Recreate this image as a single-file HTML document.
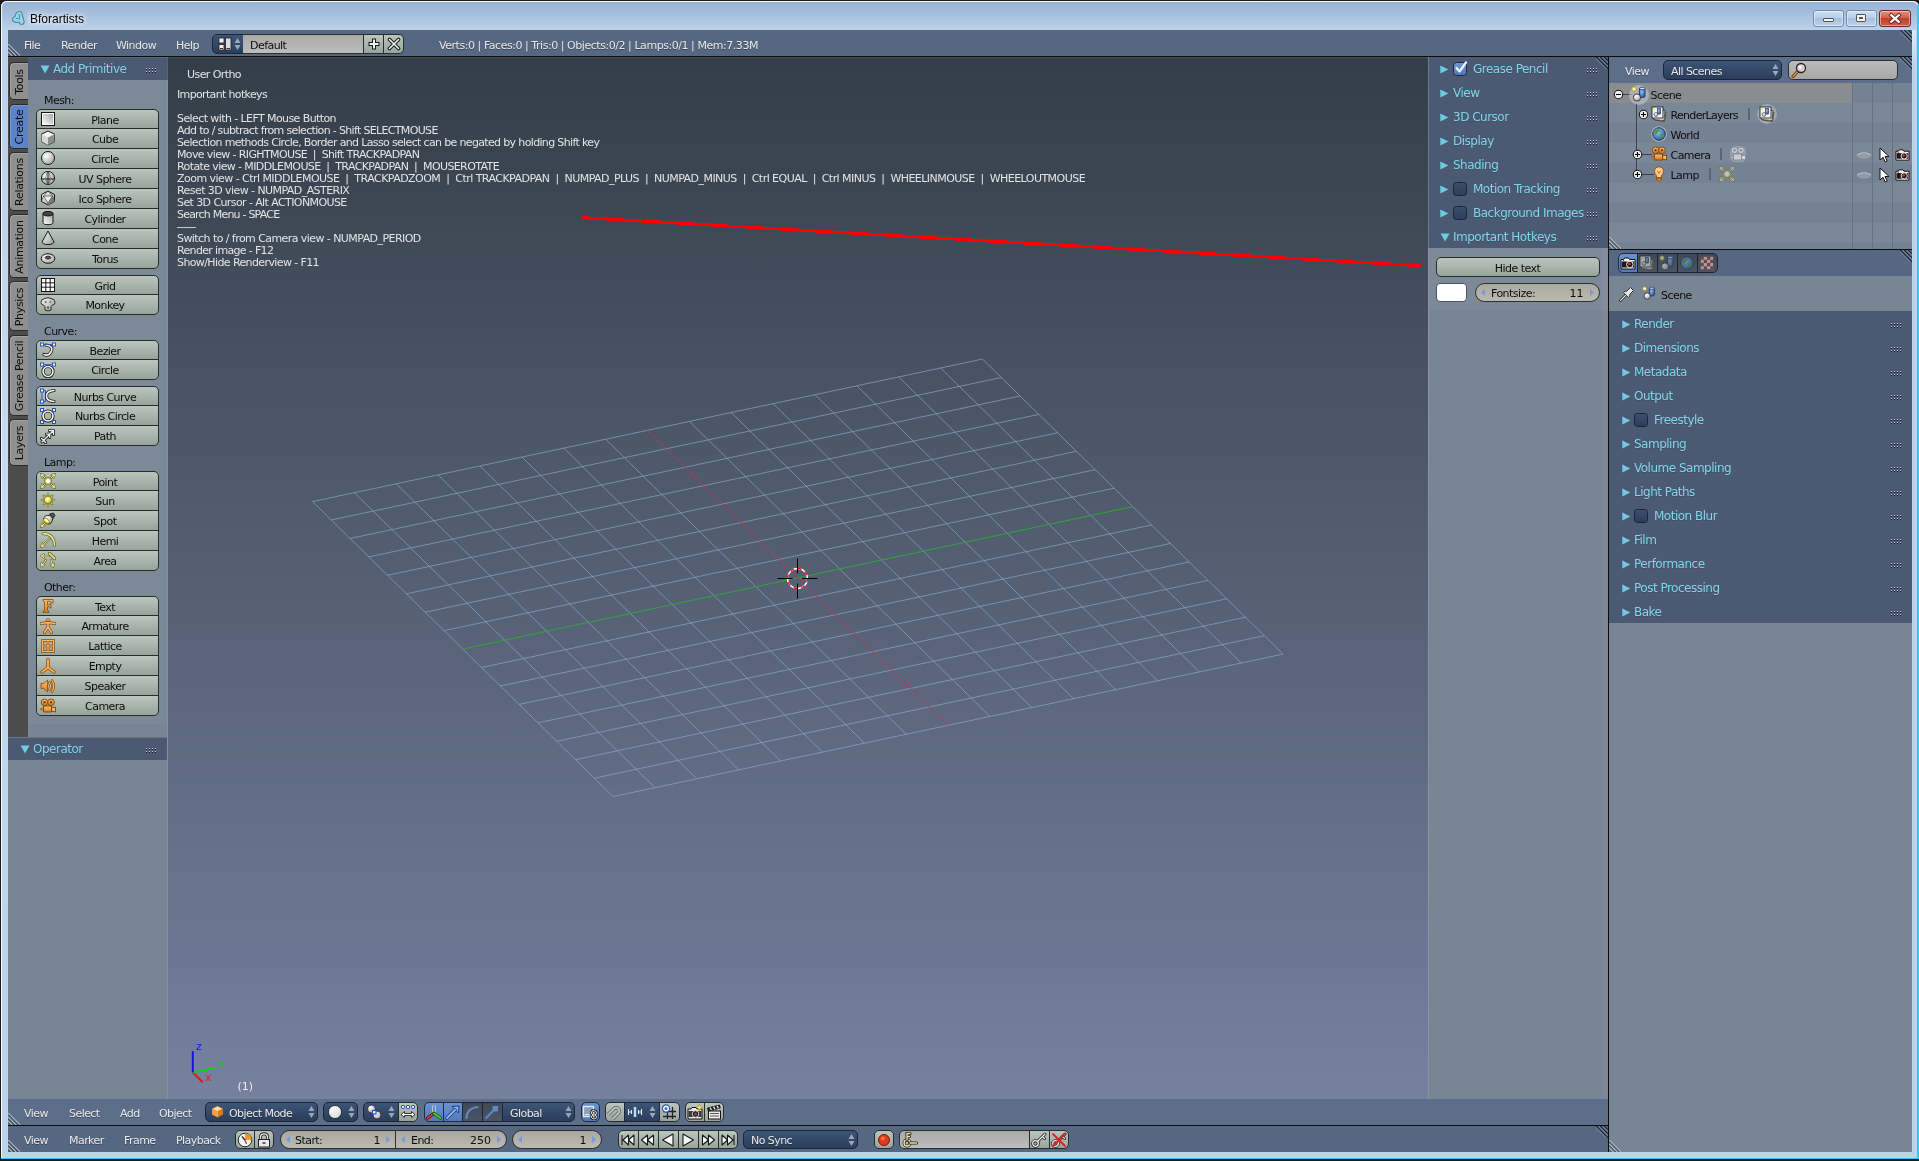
<!DOCTYPE html>
<html><head><meta charset="utf-8"><title>Bforartists</title>
<style>
html,body{margin:0;padding:0;}
body{width:1919px;height:1161px;overflow:hidden;position:relative;background:#bdd2eb;font-family:"DejaVu Sans","Liberation Sans",sans-serif;font-size:11px;letter-spacing:-0.55px;color:#0a0a0a;}
div,span,svg{position:absolute;box-sizing:border-box;}
.t{white-space:nowrap;line-height:14px;height:14px;}
.w{color:#e9e9e9;text-shadow:0 1px 0 rgba(0,0,0,.35);}
.k{color:#0c0c0c;}
.c{color:#7fd6ea;font-size:12px;letter-spacing:-0.5px;text-shadow:0 1px 0 rgba(0,0,0,.15);}
.hdr{background:#566781;}
.hdr2{background:#5d6e8b;}
.ph{background:#4b5a72;}
.pbg{background:#788593;}.pbd{background:#7c8997;}
.btn{background:linear-gradient(#bac5bd,#97a49c);border:1px solid #2a2c2c;}
.dd{background:linear-gradient(#3d5577,#2a3d5c);border:1px solid #1b2636;}
.num{background:linear-gradient(#aaa9a0,#bbbab1);border:1px solid #2e2e2e;}
.txf{background:linear-gradient(#a9a9a9,#bdbdbd);border:1px solid #2e2e2e;}
.blu{background:linear-gradient(#6a92d0,#507ab8);border:1px solid #1d2b45;}
.drk{background:linear-gradient(#3f4957,#4a5564);border:1px solid #1d2330;}
</style></head>
<body>
<div style="left:0;top:0;width:1919px;height:1161px;will-change:transform;">
<svg width="0" height="0" style="left:0;top:0"><defs>
<linearGradient id="gw" x1="0" y1="0" x2="1" y2="1"><stop offset="0" stop-color="#fff"/><stop offset="1" stop-color="#9a9a9a"/></linearGradient>
<linearGradient id="gw2" x1="1" y1="0" x2="0" y2="1"><stop offset="0" stop-color="#a8a8a8"/><stop offset="1" stop-color="#fafafa"/></linearGradient>
<radialGradient id="gs" cx="0.35" cy="0.3" r="0.8"><stop offset="0" stop-color="#fff"/><stop offset="1" stop-color="#a2a2a2"/></radialGradient>
<radialGradient id="gy" cx="0.4" cy="0.35" r="0.7"><stop offset="0" stop-color="#fff"/><stop offset="0.5" stop-color="#f4ee50"/><stop offset="1" stop-color="#9a9420"/></radialGradient>
<linearGradient id="go" x1="0" y1="0" x2="0" y2="1"><stop offset="0" stop-color="#ffc070"/><stop offset="1" stop-color="#d97a1a"/></linearGradient>
<radialGradient id="gb" cx="0.4" cy="0.35" r="0.7"><stop offset="0" stop-color="#8fc0f0"/><stop offset="1" stop-color="#2a5aa0"/></radialGradient>
</defs></svg>
<div style="left:0px;top:0px;width:1919px;height:1161px;background:#1b1b1b;"></div>
<div style="left:1px;top:1px;width:1918px;height:1158px;background:#bdd2eb;border-radius:6px 6px 0 0;box-shadow:inset 0 1px 0 0 #f4f9ff, inset 1px 0 0 0 #f4f9ff;"></div>
<div style="left:2px;top:2px;width:1915px;height:28px;background:linear-gradient(#98b3d5,#a8c0de 45%,#bad2eb);border-radius:5px 5px 0 0;"></div>
<div style="left:1px;top:1158px;width:1917px;height:1px;background:#3cc4ea;"></div>
<div style="left:1917px;top:5px;width:2px;height:1154px;background:#46c2ee;"></div>
<div style="left:1912px;top:30px;width:4px;height:40px;background:linear-gradient(#dcebfa,#bdd2eb);"></div>
<div style="left:2px;top:100px;width:6px;height:900px;background:linear-gradient(#bdd2eb,#c6daf0 40%,#bdd2eb);"></div>
<svg style="left:11px;top:10px;" width="15" height="16" viewBox="0 0 15 16"><path d="M8 1.500Q10.800 1 11 4L12.500 9.500Q14.500 13.500 11 14.500Q8.500 14.500 8 12Q4 13 2 11Q0.500 8 4 6.500Q4.500 2.500 8 1.500Z" fill="#8fd8f0" stroke="#5a7f96" stroke-width="1.100"/><path d="M5 8.500Q8 8 9 9.500M8 4Q9 6 8.500 8" fill="none" stroke="#5a7f96" stroke-width="1"/></svg>
<span class="t" style="left:30px;top:11px;font-family:'Liberation Sans',sans-serif;font-size:12px;letter-spacing:0;color:#000;line-height:16px;height:16px;text-shadow:0 0 4px #fff,0 0 6px #fff;">Bforartists</span>
<div style="left:1813px;top:10px;width:31px;height:17px;background:linear-gradient(#cfe0f2,#b9cfe8 45%,#a5c0de 50%,#bcd2ea);border:1px solid #6f8db4;border-radius:3px;box-shadow:inset 0 0 0 1px rgba(255,255,255,.45);"></div>
<div style="left:1846px;top:10px;width:31px;height:17px;background:linear-gradient(#cfe0f2,#b9cfe8 45%,#a5c0de 50%,#bcd2ea);border:1px solid #6f8db4;border-radius:3px;box-shadow:inset 0 0 0 1px rgba(255,255,255,.45);"></div>
<div style="left:1879px;top:10px;width:32px;height:17px;background:linear-gradient(#e0907f,#d4604c 45%,#c2402c 50%,#d05a44);border:1px solid #6a2a22;border-radius:3px;box-shadow:inset 0 0 0 1px rgba(255,255,255,.45);"></div>
<div style="left:1823px;top:18px;width:11px;height:4px;background:#f4f4f4;border:1px solid #555;border-radius:1px;"></div>
<div style="left:1856px;top:14px;width:10px;height:8px;background:#f4f4f4;border:1px solid #555;border-radius:1px;"></div>
<div style="left:1859px;top:17px;width:4px;height:2px;background:#8fa9c8;border:1px solid #555;"></div>
<svg style="left:1888px;top:12px;" width="14" height="13" viewBox="0 0 14 13"><path d="M3.200 3.200L10.800 9.800M10.800 3.200L3.200 9.800" stroke="#5a2018" stroke-width="3.800" stroke-linecap="square"/><path d="M3.200 3.200L10.800 9.800M10.800 3.200L3.200 9.800" stroke="#fff" stroke-width="2.200" stroke-linecap="square"/></svg>
<div style="left:8px;top:30px;width:1904px;height:1122px;background:#0c0c0c;"></div>
<div class="hdr" style="left:8px;top:30px;width:1904px;height:26px;"></div>
<svg style="left:8px;top:44px;" width="12" height="12" viewBox="0 0 12 12"><path d="M0 0L12 12" stroke="#aab6c4" stroke-width="1.3"/><path d="M0 1.4L10.6 12" stroke="#2a3440" stroke-width="0.9"/><path d="M0 4L8 12" stroke="#aab6c4" stroke-width="1.3"/><path d="M0 5.4L6.6 12" stroke="#2a3440" stroke-width="0.9"/><path d="M0 8L4 12" stroke="#aab6c4" stroke-width="1.3"/><path d="M0 9.4L2.5999999999999996 12" stroke="#2a3440" stroke-width="0.9"/></svg>
<svg style="left:1900px;top:30px;" width="12" height="12" viewBox="0 0 12 12"><path d="M0 0L12 12" stroke="#1c2430" stroke-width="1.3"/><path d="M-1.4 0L12 13.4" stroke="#8f9db3" stroke-width="0.9"/><path d="M4 0L12 8" stroke="#1c2430" stroke-width="1.3"/><path d="M2.6 0L12 9.4" stroke="#8f9db3" stroke-width="0.9"/><path d="M8 0L12 4" stroke="#1c2430" stroke-width="1.3"/><path d="M6.6 0L12 5.4" stroke="#8f9db3" stroke-width="0.9"/></svg>
<span class="t w" style="left:24px;top:39px;">File</span>
<span class="t w" style="left:61px;top:39px;">Render</span>
<span class="t w" style="left:116px;top:39px;">Window</span>
<span class="t w" style="left:176px;top:39px;">Help</span>
<div class="dd" style="left:212px;top:34px;width:32px;height:20px;border-radius:5px 0 0 5px;"></div>
<svg style="left:217px;top:36px" width="16" height="16" viewBox="0 0 16 16"><rect x="2" y="2" width="5" height="5" fill="#f0f0f0" stroke="#222" stroke-width=".8"/><rect x="2" y="8.500" width="5" height="5.500" fill="#f0f0f0" stroke="#222" stroke-width=".8"/><rect x="8.500" y="2" width="5.500" height="12" fill="#dcdcdc" stroke="#222" stroke-width=".8"/><rect x="3" y="12" width="3" height="1" fill="#333"/><rect x="9.500" y="12" width="3.500" height="1" fill="#333"/></svg>
<svg style="left:234px;top:37px;" width="7" height="14" viewBox="0 0 7 14"><path d="M3.5 1L6.5 6L0.5 6Z M3.5 13L6.5 8L0.5 8Z" fill="#9aa7bb"/></svg>
<div class="txf" style="left:243px;top:34px;width:121px;height:20px;border-left:0;"></div>
<span class="t k" style="left:250px;top:39px;">Default</span>
<div class="btn" style="left:363px;top:34px;width:21px;height:20px;"></div>
<div class="btn" style="left:383px;top:34px;width:21px;height:20px;border-radius:0 5px 5px 0;"></div>
<svg style="left:367px;top:37px;" width="14" height="14" viewBox="0 0 14 14"><path d="M7 1.500V12.500M1.500 7H12.500" stroke="#1a1a1a" stroke-width="4"/><path d="M7 2.500V11.500M2.500 7H11.500" stroke="#f2f2f2" stroke-width="2"/></svg>
<svg style="left:387px;top:37px;" width="14" height="14" viewBox="0 0 14 14"><path d="M2.500 2.500L11.500 11.500M11.500 2.500L2.500 11.500" stroke="#1a1a1a" stroke-width="3.600" stroke-linecap="round"/><path d="M2.500 2.500L11.500 11.500M11.500 2.500L2.500 11.500" stroke="#f2f2f2" stroke-width="1.600" stroke-linecap="round"/></svg>
<span class="t w" style="left:439px;top:39px;letter-spacing:-0.453px;">Verts:0 | Faces:0 | Tris:0 | Objects:0/2 | Lamps:0/1 | Mem:7.33M</span>
<div class="pbg" style="left:8px;top:57px;width:159px;height:1042px;"></div>
<div style="left:167px;top:57px;width:1px;height:1042px;background:#8591a1;"></div>
<div class="pbd" style="left:28px;top:80px;width:139px;height:644px;"></div>
<div style="left:8px;top:57px;width:20px;height:680px;background:#4c4c4c;"></div>
<div style="left:9px;top:62px;width:19px;height:38px;background:#8f8f8f;border:1px solid #2a2a2a;border-right:0;border-radius:5px 0 0 5px;box-shadow:inset 1px 1px 0 rgba(255,255,255,.18);"></div>
<span class="t k" style="left:-40.5px;top:74.5px;width:120px;text-align:center;transform:rotate(-90deg);letter-spacing:-0.3px;">Tools</span>
<div style="left:9px;top:104px;width:19px;height:45px;background:#5a84c7;border:1px solid #2a2a2a;border-right:0;border-radius:5px 0 0 5px;box-shadow:inset 1px 1px 0 rgba(255,255,255,.18);"></div>
<span class="t k" style="left:-40.5px;top:120.0px;width:120px;text-align:center;transform:rotate(-90deg);letter-spacing:-0.3px;">Create</span>
<div style="left:9px;top:152px;width:19px;height:59px;background:#8f8f8f;border:1px solid #2a2a2a;border-right:0;border-radius:5px 0 0 5px;box-shadow:inset 1px 1px 0 rgba(255,255,255,.18);"></div>
<span class="t k" style="left:-40.5px;top:175.0px;width:120px;text-align:center;transform:rotate(-90deg);letter-spacing:-0.3px;">Relations</span>
<div style="left:9px;top:214px;width:19px;height:64px;background:#8f8f8f;border:1px solid #2a2a2a;border-right:0;border-radius:5px 0 0 5px;box-shadow:inset 1px 1px 0 rgba(255,255,255,.18);"></div>
<span class="t k" style="left:-40.5px;top:239.5px;width:120px;text-align:center;transform:rotate(-90deg);letter-spacing:-0.3px;">Animation</span>
<div style="left:9px;top:281px;width:19px;height:50px;background:#8f8f8f;border:1px solid #2a2a2a;border-right:0;border-radius:5px 0 0 5px;box-shadow:inset 1px 1px 0 rgba(255,255,255,.18);"></div>
<span class="t k" style="left:-40.5px;top:299.5px;width:120px;text-align:center;transform:rotate(-90deg);letter-spacing:-0.3px;">Physics</span>
<div style="left:9px;top:335px;width:19px;height:81px;background:#8f8f8f;border:1px solid #2a2a2a;border-right:0;border-radius:5px 0 0 5px;box-shadow:inset 1px 1px 0 rgba(255,255,255,.18);"></div>
<span class="t k" style="left:-40.5px;top:369.0px;width:120px;text-align:center;transform:rotate(-90deg);letter-spacing:-0.3px;">Grease Pencil</span>
<div style="left:9px;top:419px;width:19px;height:47px;background:#8f8f8f;border:1px solid #2a2a2a;border-right:0;border-radius:5px 0 0 5px;box-shadow:inset 1px 1px 0 rgba(255,255,255,.18);"></div>
<span class="t k" style="left:-40.5px;top:436.0px;width:120px;text-align:center;transform:rotate(-90deg);letter-spacing:-0.3px;">Layers</span>
<div class="ph" style="left:28px;top:57px;width:139px;height:23px;"></div>
<div style="left:167px;top:57px;width:1px;height:23px;background:#566378;"></div>
<svg style="left:40px;top:65px;" width="10" height="9" viewBox="0 0 10 9"><path d="M0.5 0.5L9.5 0.5L5 8.5Z" fill="#6fcbe3"/></svg>
<span class="t c" style="left:53px;top:62px;">Add Primitive</span>
<svg style="left:146px;top:68px;shape-rendering:crispEdges;" width="12" height="6" viewBox="0 0 12 6"><rect x="0" y="0" width="1" height="1" fill="#bcc6d8"/><rect x="0" y="1" width="1" height="1" fill="#10182a"/><rect x="3" y="0" width="1" height="1" fill="#bcc6d8"/><rect x="3" y="1" width="1" height="1" fill="#10182a"/><rect x="6" y="0" width="1" height="1" fill="#bcc6d8"/><rect x="6" y="1" width="1" height="1" fill="#10182a"/><rect x="9" y="0" width="1" height="1" fill="#bcc6d8"/><rect x="9" y="1" width="1" height="1" fill="#10182a"/><rect x="0" y="3" width="1" height="1" fill="#bcc6d8"/><rect x="0" y="4" width="1" height="1" fill="#10182a"/><rect x="3" y="3" width="1" height="1" fill="#bcc6d8"/><rect x="3" y="4" width="1" height="1" fill="#10182a"/><rect x="6" y="3" width="1" height="1" fill="#bcc6d8"/><rect x="6" y="4" width="1" height="1" fill="#10182a"/><rect x="9" y="3" width="1" height="1" fill="#bcc6d8"/><rect x="9" y="4" width="1" height="1" fill="#10182a"/></svg>
<span class="t k" style="left:44px;top:94px;">Mesh:</span>
<div class="btn" style="left:36px;top:109px;width:123px;height:20px;border-radius:5px 5px 0 0;"></div><svg style="left:40px;top:111px" width="16" height="16" viewBox="0 0 16 16"><rect x="1.5" y="1.5" width="13" height="13" fill="#fff" stroke="#161616"/><rect x="3" y="3" width="10" height="10" fill="url(#gw2)"/></svg><span class="t k" style="left:5px;width:200px;text-align:center;top:114.0px;">Plane</span><div class="btn" style="left:36px;top:128px;width:123px;height:21px;border-radius:0;"></div><svg style="left:40px;top:130px" width="16" height="16" viewBox="0 0 16 16"><path d="M8 1L14.5 4.2V11.6L8 15L1.5 11.6V4.2Z" fill="#f4f4f4" stroke="#161616" stroke-linejoin="round"/><path d="M8 7.6L14.5 4.2V11.6L8 15Z" fill="#8e8e8e"/><path d="M8 7.6L1.5 4.2V11.6L8 15Z" fill="#d6d6d6"/></svg><span class="t k" style="left:5px;width:200px;text-align:center;top:132.5px;">Cube</span><div class="btn" style="left:36px;top:148px;width:123px;height:21px;border-radius:0;"></div><svg style="left:40px;top:150px" width="16" height="16" viewBox="0 0 16 16"><circle cx="8" cy="8" r="6.5" fill="url(#gs)" stroke="#161616"/></svg><span class="t k" style="left:5px;width:200px;text-align:center;top:152.5px;">Circle</span><div class="btn" style="left:36px;top:168px;width:123px;height:21px;border-radius:0;"></div><svg style="left:40px;top:170px" width="16" height="16" viewBox="0 0 16 16"><circle cx="8" cy="8" r="6.5" fill="url(#gs)" stroke="#161616"/><path d="M8 1.5V14.5M1.8 9H14.2" stroke="#161616" stroke-width="1" fill="none"/><path d="M8 1.5Q3.5 8 8 14.5M8 1.5Q12.5 8 8 14.5" stroke="#555" stroke-width=".7" fill="none"/></svg><span class="t k" style="left:5px;width:200px;text-align:center;top:172.5px;">UV Sphere</span><div class="btn" style="left:36px;top:188px;width:123px;height:21px;border-radius:0;"></div><svg style="left:40px;top:190px" width="16" height="16" viewBox="0 0 16 16"><path d="M8 1L14.5 4.5V11.5L8 15L1.5 11.5V4.5Z" fill="url(#gw)" stroke="#161616" stroke-linejoin="round"/><path d="M3.5 6H12.5L8 13Z" fill="#eee" stroke="#444" stroke-width=".7"/><path d="M8 1L3.5 6M8 1L12.5 6M1.5 11.5L3.5 6M14.5 11.5L12.5 6M8 15V13" stroke="#444" stroke-width=".7"/><path d="M12.5 6L14.5 11.5L8 15L8 13Z" fill="#777"/></svg><span class="t k" style="left:5px;width:200px;text-align:center;top:192.5px;">Ico Sphere</span><div class="btn" style="left:36px;top:208px;width:123px;height:21px;border-radius:0;"></div><svg style="left:40px;top:210px" width="16" height="16" viewBox="0 0 16 16"><path d="M3 3.5V12.5A5 2.2 0 0 0 13 12.5V3.5Z" fill="url(#gw2)" stroke="#161616"/><ellipse cx="8" cy="3.7" rx="5" ry="2.2" fill="#444" stroke="#161616"/></svg><span class="t k" style="left:5px;width:200px;text-align:center;top:212.5px;">Cylinder</span><div class="btn" style="left:36px;top:228px;width:123px;height:21px;border-radius:0;"></div><svg style="left:40px;top:230px" width="16" height="16" viewBox="0 0 16 16"><path d="M8 1L14 12A6 2.6 0 0 1 2 12Z" fill="url(#gw)" stroke="#161616" stroke-linejoin="round"/></svg><span class="t k" style="left:5px;width:200px;text-align:center;top:232.5px;">Cone</span><div class="btn" style="left:36px;top:248px;width:123px;height:21px;border-radius:0 0 5px 5px;"></div><svg style="left:40px;top:250px" width="16" height="16" viewBox="0 0 16 16"><ellipse cx="8" cy="8.5" rx="6.8" ry="4.8" fill="url(#gs)" stroke="#161616"/><ellipse cx="8" cy="7.6" rx="2.8" ry="1.5" fill="#555" stroke="#161616" stroke-width=".8"/></svg><span class="t k" style="left:5px;width:200px;text-align:center;top:252.5px;">Torus</span>
<div class="btn" style="left:36px;top:275px;width:123px;height:20px;border-radius:5px 5px 0 0;"></div><svg style="left:40px;top:277px" width="16" height="16" viewBox="0 0 16 16"><rect x="1.5" y="1.5" width="13" height="13" fill="#fff" stroke="#161616"/><path d="M5.8 1.5V14.5M10.2 1.5V14.5M1.5 5.8H14.5M1.5 10.2H14.5" stroke="#161616"/></svg><span class="t k" style="left:5px;width:200px;text-align:center;top:280.0px;">Grid</span><div class="btn" style="left:36px;top:294px;width:123px;height:21px;border-radius:0 0 5px 5px;"></div><svg style="left:40px;top:296px" width="16" height="16" viewBox="0 0 16 16"><path d="M5 2.5Q8 1 11 2.5Q15 3 15 6.5Q15 8.5 12.5 9L11 10.5V14Q8 15.8 5 14V10.5L3.500 9Q1 8.500 1 6.500Q1 3 5 2.500Z" fill="url(#gw)" stroke="#161616" stroke-width=".9"/><circle cx="5.6" cy="6" r="1.3" fill="#888"/><circle cx="10.4" cy="6" r="1.3" fill="#888"/><rect x="7.2" y="10.500" width="1.600" height="2.200" fill="#444"/></svg><span class="t k" style="left:5px;width:200px;text-align:center;top:298.5px;">Monkey</span>
<span class="t k" style="left:44px;top:325px;">Curve:</span>
<div class="btn" style="left:36px;top:340px;width:123px;height:20px;border-radius:5px 5px 0 0;"></div><svg style="left:40px;top:342px" width="16" height="16" viewBox="0 0 16 16"><path d="M6 3Q14 4 11 10Q8.500 14.500 4 12.500" fill="none" stroke="#161616" stroke-width="3.2" stroke-linecap="round"/><path d="M6 3Q14 4 11 10Q8.500 14.500 4 12.500" fill="none" stroke="#f4f4f4" stroke-width="1.600" stroke-linecap="round"/><path d="M2 2.500H14" stroke="#2a55c8" stroke-width=".8"/><rect x="0.5" y="1" width="3" height="3" fill="#fff" stroke="#2a55c8" stroke-width="1"/><rect x="12.5" y="1" width="3" height="3" fill="#fff" stroke="#2a55c8" stroke-width="1"/></svg><span class="t k" style="left:5px;width:200px;text-align:center;top:345.0px;">Bezier</span><div class="btn" style="left:36px;top:359px;width:123px;height:21px;border-radius:0 0 5px 5px;"></div><svg style="left:40px;top:362px" width="16" height="16" viewBox="0 0 16 16"><circle cx="8" cy="9.500" r="5" fill="none" stroke="#161616" stroke-width="3.200"/><circle cx="8" cy="9.500" r="5" fill="none" stroke="#f4f4f4" stroke-width="1.600"/><path d="M2 2.500H14" stroke="#2a55c8" stroke-width=".8"/><rect x="0.5" y="1" width="3" height="3" fill="#fff" stroke="#2a55c8" stroke-width="1"/><rect x="12.5" y="1" width="3" height="3" fill="#fff" stroke="#2a55c8" stroke-width="1"/></svg><span class="t k" style="left:5px;width:200px;text-align:center;top:363.5px;">Circle</span>
<div class="btn" style="left:36px;top:386px;width:123px;height:20px;border-radius:5px 5px 0 0;"></div><svg style="left:40px;top:388px" width="16" height="16" viewBox="0 0 16 16"><path d="M2 2.500H5.500V13.500H2Z" fill="#a8c4ee" fill-opacity=".35" stroke="#2a55c8" stroke-width=".9"/><path d="M14 2.500Q6.500 3 6.500 8Q6.500 13 14 13.500" fill="none" stroke="#161616" stroke-width="3.200" stroke-linecap="round"/><path d="M14 2.500Q6.500 3 6.500 8Q6.500 13 14 13.500" fill="none" stroke="#f4f4f4" stroke-width="1.600" stroke-linecap="round"/><rect x="0.5" y="1" width="3" height="3" fill="#fff" stroke="#2a55c8" stroke-width="1"/><rect x="0.5" y="12" width="3" height="3" fill="#fff" stroke="#2a55c8" stroke-width="1"/></svg><span class="t k" style="left:5px;width:200px;text-align:center;top:391.0px;">Nurbs Curve</span><div class="btn" style="left:36px;top:405px;width:123px;height:21px;border-radius:0;"></div><svg style="left:40px;top:408px" width="16" height="16" viewBox="0 0 16 16"><circle cx="8" cy="8" r="5" fill="none" stroke="#161616" stroke-width="3.200"/><circle cx="8" cy="8" r="5" fill="none" stroke="#f4f4f4" stroke-width="1.600"/><rect x="0.5" y="0.5" width="3" height="3" fill="#fff" stroke="#2a55c8" stroke-width="1"/><rect x="12.5" y="0.5" width="3" height="3" fill="#fff" stroke="#2a55c8" stroke-width="1"/><rect x="0.5" y="12.5" width="3" height="3" fill="#fff" stroke="#2a55c8" stroke-width="1"/><rect x="12.5" y="12.5" width="3" height="3" fill="#fff" stroke="#2a55c8" stroke-width="1"/></svg><span class="t k" style="left:5px;width:200px;text-align:center;top:409.5px;">Nurbs Circle</span><div class="btn" style="left:36px;top:425px;width:123px;height:21px;border-radius:0 0 5px 5px;"></div><svg style="left:40px;top:428px" width="16" height="16" viewBox="0 0 16 16"><path d="M2 14L13.500 2.500M9.500 2.500H13.500V6.500M6.500 6.200H9.700V9.400M1.500 10.500L3.800 12.200L5.500 14.500" fill="none" stroke="#161616" stroke-width="3" stroke-linecap="round" stroke-linejoin="round"/><path d="M2 14L13.500 2.500M9.500 2.500H13.500V6.500M6.500 6.200H9.700V9.400M1.500 10.500L3.800 12.200L5.500 14.500" fill="none" stroke="#f4f4f4" stroke-width="1.300" stroke-linecap="round" stroke-linejoin="round"/></svg><span class="t k" style="left:5px;width:200px;text-align:center;top:429.5px;">Path</span>
<span class="t k" style="left:44px;top:456px;">Lamp:</span>
<div class="btn" style="left:36px;top:471px;width:123px;height:20px;border-radius:5px 5px 0 0;"></div><svg style="left:40px;top:473px" width="16" height="16" viewBox="0 0 16 16"><path d="M5 5L1.5 1.5M4.4 2.1L1.5 1.5L2.1 4.4" fill="none" stroke="#6e6b28" stroke-width="2.2" stroke-linecap="round"/><path d="M5 5L1.5 1.5M4.4 2.1L1.5 1.5L2.1 4.4" fill="none" stroke="#eeeaa8" stroke-width="1" stroke-linecap="round"/><path d="M11 5L14.5 1.5M13.9 4.4L14.5 1.5L11.6 2.1" fill="none" stroke="#6e6b28" stroke-width="2.2" stroke-linecap="round"/><path d="M11 5L14.5 1.5M13.9 4.4L14.5 1.5L11.6 2.1" fill="none" stroke="#eeeaa8" stroke-width="1" stroke-linecap="round"/><path d="M5 11L1.5 14.5M2.1 11.6L1.5 14.5L4.4 13.9" fill="none" stroke="#6e6b28" stroke-width="2.2" stroke-linecap="round"/><path d="M5 11L1.5 14.5M2.1 11.6L1.5 14.5L4.4 13.9" fill="none" stroke="#eeeaa8" stroke-width="1" stroke-linecap="round"/><path d="M11 11L14.5 14.5M11.6 13.9L14.5 14.5L13.9 11.6" fill="none" stroke="#6e6b28" stroke-width="2.2" stroke-linecap="round"/><path d="M11 11L14.5 14.5M11.6 13.9L14.5 14.5L13.9 11.6" fill="none" stroke="#eeeaa8" stroke-width="1" stroke-linecap="round"/><circle cx="8" cy="8" r="3.600" fill="#d6d27a" stroke="#77742a" stroke-width="0.8"/><circle cx="8" cy="8" r="1.900" fill="#fff"/></svg><span class="t k" style="left:5px;width:200px;text-align:center;top:476.0px;">Point</span><div class="btn" style="left:36px;top:490px;width:123px;height:21px;border-radius:0;"></div><svg style="left:40px;top:492px" width="16" height="16" viewBox="0 0 16 16"><path d="M8 0.800L9.300 3.500H6.700Z" fill="#ecea9c" stroke="#77742a" stroke-width=".7" transform="rotate(0 8 8)"/><path d="M8 0.800L9.300 3.500H6.700Z" fill="#ecea9c" stroke="#77742a" stroke-width=".7" transform="rotate(45 8 8)"/><path d="M8 0.800L9.300 3.500H6.700Z" fill="#ecea9c" stroke="#77742a" stroke-width=".7" transform="rotate(90 8 8)"/><path d="M8 0.800L9.300 3.500H6.700Z" fill="#ecea9c" stroke="#77742a" stroke-width=".7" transform="rotate(135 8 8)"/><path d="M8 0.800L9.300 3.500H6.700Z" fill="#ecea9c" stroke="#77742a" stroke-width=".7" transform="rotate(180 8 8)"/><path d="M8 0.800L9.300 3.500H6.700Z" fill="#ecea9c" stroke="#77742a" stroke-width=".7" transform="rotate(225 8 8)"/><path d="M8 0.800L9.300 3.500H6.700Z" fill="#ecea9c" stroke="#77742a" stroke-width=".7" transform="rotate(270 8 8)"/><path d="M8 0.800L9.300 3.500H6.700Z" fill="#ecea9c" stroke="#77742a" stroke-width=".7" transform="rotate(315 8 8)"/><circle cx="8" cy="8" r="3.800" fill="url(#gy)" stroke="#77742a" stroke-width="0.8"/></svg><span class="t k" style="left:5px;width:200px;text-align:center;top:494.5px;">Sun</span><div class="btn" style="left:36px;top:510px;width:123px;height:21px;border-radius:0;"></div><svg style="left:40px;top:512px" width="16" height="16" viewBox="0 0 16 16"><path d="M6 10L1.5 14.5M2.1 11.6L1.5 14.5L4.4 13.9" fill="none" stroke="#6e6b28" stroke-width="2.2" stroke-linecap="round"/><path d="M6 10L1.5 14.5M2.1 11.6L1.5 14.5L4.4 13.9" fill="none" stroke="#eeeaa8" stroke-width="1" stroke-linecap="round"/><path d="M9.500 2L13.500 1L15 3.500L13 6.500Z" fill="#555" stroke="#161616" stroke-width=".8"/><path d="M3.500 6Q7 1.500 11.500 4.500Q14 8 10 12Q5 13 3.500 6Z" fill="url(#gs)" stroke="#161616" stroke-width=".9"/><ellipse cx="6.500" cy="9" rx="3.600" ry="2.200" transform="rotate(40 6.500 9)" fill="url(#gy)" stroke="#77742a" stroke-width=".7"/></svg><span class="t k" style="left:5px;width:200px;text-align:center;top:514.5px;">Spot</span><div class="btn" style="left:36px;top:530px;width:123px;height:21px;border-radius:0;"></div><svg style="left:40px;top:532px" width="16" height="16" viewBox="0 0 16 16"><path d="M10 6.5L1.5 14.5M2.1 11.6L1.5 14.5L4.5 14.0" fill="none" stroke="#6e6b28" stroke-width="2.2" stroke-linecap="round"/><path d="M10 6.5L1.5 14.5M2.1 11.6L1.5 14.5L4.5 14.0" fill="none" stroke="#eeeaa8" stroke-width="1" stroke-linecap="round"/><path d="M3 1.500Q14 2 14.500 13" fill="none" stroke="#6e6b28" stroke-width="3" stroke-linecap="round"/><path d="M3 1.500Q14 2 14.500 13" fill="none" stroke="#eeeaa8" stroke-width="1.400" stroke-linecap="round"/></svg><span class="t k" style="left:5px;width:200px;text-align:center;top:534.5px;">Hemi</span><div class="btn" style="left:36px;top:550px;width:123px;height:21px;border-radius:0 0 5px 5px;"></div><svg style="left:40px;top:552px" width="16" height="16" viewBox="0 0 16 16"><path d="M9 4L1.5 4M4.0 2.3L1.5 4L4.0 5.7" fill="none" stroke="#6e6b28" stroke-width="2.2" stroke-linecap="round"/><path d="M9 4L1.5 4M4.0 2.3L1.5 4L4.0 5.7" fill="none" stroke="#eeeaa8" stroke-width="1" stroke-linecap="round"/><path d="M6 8L1.5 14M1.6 11.0L1.5 14L4.3 13.0" fill="none" stroke="#6e6b28" stroke-width="2.2" stroke-linecap="round"/><path d="M6 8L1.5 14M1.6 11.0L1.5 14L4.3 13.0" fill="none" stroke="#eeeaa8" stroke-width="1" stroke-linecap="round"/><path d="M11 8L13 14.5M10.7 12.6L13 14.5L13.9 11.6" fill="none" stroke="#6e6b28" stroke-width="2.2" stroke-linecap="round"/><path d="M11 8L13 14.5M10.7 12.6L13 14.5L13.9 11.6" fill="none" stroke="#eeeaa8" stroke-width="1" stroke-linecap="round"/><path d="M9.500 1.500L14.500 6.500" stroke="#6e6b28" stroke-width="3.400" stroke-linecap="round"/><path d="M9.500 1.500L14.500 6.500" stroke="#eeeaa8" stroke-width="1.700" stroke-linecap="round"/></svg><span class="t k" style="left:5px;width:200px;text-align:center;top:554.5px;">Area</span>
<span class="t k" style="left:44px;top:581px;">Other:</span>
<div class="btn" style="left:36px;top:596px;width:123px;height:20px;border-radius:5px 5px 0 0;"></div><svg style="left:40px;top:598px" width="16" height="16" viewBox="0 0 16 16"><path d="M3 1.500H13V5H11.500Q11.300 3.300 9.500 3.200H7.500V7H8.700Q9.700 6.900 9.800 5.800H11V10H9.800Q9.700 8.700 8.700 8.600H7.500V12Q7.500 13 9 13.200V14.500H3V13.200Q4.500 13 4.500 12V4Q4.500 3 3 2.800Z" fill="url(#go)" stroke="#8a4a0c" stroke-width="0.8"/></svg><span class="t k" style="left:5px;width:200px;text-align:center;top:601.0px;">Text</span><div class="btn" style="left:36px;top:615px;width:123px;height:21px;border-radius:0;"></div><svg style="left:40px;top:618px" width="16" height="16" viewBox="0 0 16 16"><circle cx="8" cy="2.600" r="1.900" fill="url(#go)" stroke="#8a4a0c" stroke-width="0.8"/><path d="M1 5.500Q8 4 15 5.500" fill="none" stroke="#8a4a0c" stroke-width="3" stroke-linecap="round"/><path d="M8 5V9L4.500 14.500M8 9L11.500 14.500" fill="none" stroke="#8a4a0c" stroke-width="3" stroke-linecap="round"/><path d="M1 5.500Q8 4 15 5.500M8 5V9L4.500 14.500M8 9L11.500 14.500" fill="none" stroke="#ffb763" stroke-width="1.500" stroke-linecap="round"/></svg><span class="t k" style="left:5px;width:200px;text-align:center;top:619.5px;">Armature</span><div class="btn" style="left:36px;top:635px;width:123px;height:21px;border-radius:0;"></div><svg style="left:40px;top:638px" width="16" height="16" viewBox="0 0 16 16"><path d="M2.500 2.500H13.500V13.500H2.500ZM8 2.500V13.500M2.500 8H13.500" fill="none" stroke="#8a4a0c" stroke-width="2.600"/><path d="M2.500 2.500H13.500V13.500H2.500ZM8 2.500V13.500M2.500 8H13.500" fill="none" stroke="#ffb763" stroke-width="1.200"/></svg><span class="t k" style="left:5px;width:200px;text-align:center;top:639.5px;">Lattice</span><div class="btn" style="left:36px;top:655px;width:123px;height:21px;border-radius:0;"></div><svg style="left:40px;top:658px" width="16" height="16" viewBox="0 0 16 16"><path d="M8 1.500V9.500L2 14M8 9.500L14 14" fill="none" stroke="#8a4a0c" stroke-width="3.400" stroke-linecap="round" stroke-linejoin="round"/><path d="M8 1.500V9.500L2 14M8 9.500L14 14" fill="none" stroke="#ffb050" stroke-width="1.800" stroke-linecap="round" stroke-linejoin="round"/></svg><span class="t k" style="left:5px;width:200px;text-align:center;top:659.5px;">Empty</span><div class="btn" style="left:36px;top:675px;width:123px;height:21px;border-radius:0;"></div><svg style="left:40px;top:678px" width="16" height="16" viewBox="0 0 16 16"><path d="M1 5.500H3.500L7.500 2V14L3.500 10.500H1Z" fill="url(#go)" stroke="#8a4a0c" stroke-width="0.8" stroke-linejoin="round"/><path d="M9.500 4.500Q11.500 8 9.500 11.500M12 2.500Q15.500 8 12 13.500" fill="none" stroke="#8a4a0c" stroke-width="2.600" stroke-linecap="round"/><path d="M9.500 4.500Q11.500 8 9.500 11.500M12 2.500Q15.500 8 12 13.500" fill="none" stroke="#ffb763" stroke-width="1.200" stroke-linecap="round"/></svg><span class="t k" style="left:5px;width:200px;text-align:center;top:679.5px;">Speaker</span><div class="btn" style="left:36px;top:695px;width:123px;height:21px;border-radius:0 0 5px 5px;"></div><svg style="left:40px;top:698px" width="16" height="16" viewBox="0 0 16 16"><circle cx="4.500" cy="4.300" r="3.300" fill="url(#go)" stroke="#7a400a" stroke-width=".9"/><circle cx="11" cy="4.300" r="3.300" fill="url(#go)" stroke="#7a400a" stroke-width=".9"/><circle cx="4.500" cy="4.300" r="1.200" fill="#7a400a"/><circle cx="11" cy="4.300" r="1.200" fill="#7a400a"/><path d="M3.500 8H11.500V14H3.500Z" fill="url(#go)" stroke="#7a400a" stroke-width=".9"/><path d="M11.500 10L15.500 9V14L11.500 13Z" fill="#ffb763" stroke="#7a400a" stroke-width=".9"/><path d="M0.800 10.500H3.500V12H0.800Z" fill="#ffb763" stroke="#7a400a" stroke-width=".7"/></svg><span class="t k" style="left:5px;width:200px;text-align:center;top:699.5px;">Camera</span>
<div style="left:8px;top:737px;width:159px;height:1px;background:#6a7686;"></div>
<div class="ph" style="left:8px;top:738px;width:159px;height:22px;"></div>
<svg style="left:20px;top:745px;" width="10" height="9" viewBox="0 0 10 9"><path d="M0.5 0.5L9.5 0.5L5 8.5Z" fill="#6fcbe3"/></svg>
<span class="t c" style="left:33px;top:742px;">Operator</span>
<svg style="left:146px;top:748px;shape-rendering:crispEdges;" width="12" height="6" viewBox="0 0 12 6"><rect x="0" y="0" width="1" height="1" fill="#bcc6d8"/><rect x="0" y="1" width="1" height="1" fill="#10182a"/><rect x="3" y="0" width="1" height="1" fill="#bcc6d8"/><rect x="3" y="1" width="1" height="1" fill="#10182a"/><rect x="6" y="0" width="1" height="1" fill="#bcc6d8"/><rect x="6" y="1" width="1" height="1" fill="#10182a"/><rect x="9" y="0" width="1" height="1" fill="#bcc6d8"/><rect x="9" y="1" width="1" height="1" fill="#10182a"/><rect x="0" y="3" width="1" height="1" fill="#bcc6d8"/><rect x="0" y="4" width="1" height="1" fill="#10182a"/><rect x="3" y="3" width="1" height="1" fill="#bcc6d8"/><rect x="3" y="4" width="1" height="1" fill="#10182a"/><rect x="6" y="3" width="1" height="1" fill="#bcc6d8"/><rect x="6" y="4" width="1" height="1" fill="#10182a"/><rect x="9" y="3" width="1" height="1" fill="#bcc6d8"/><rect x="9" y="4" width="1" height="1" fill="#10182a"/></svg>
<div style="left:168px;top:57px;width:1260px;height:1042px;background:linear-gradient(#343e48,#75819f);"></div>
<svg style="left:168px;top:57px;" width="1260" height="1042" viewBox="0 0 1260 1042"><path d="M144.5 444.6L814.5 302.1M144.5 444.6L445.1 739.6M163.3 463.0L833.3 320.5M186.4 435.7L487.0 730.7M182.1 481.5L852.1 339.0M228.2 426.8L528.9 721.8M200.8 499.9L870.8 357.4M270.1 417.9L570.7 712.9M219.6 518.3L889.6 375.8M312.0 409.0L612.6 704.0M238.4 536.8L908.4 394.3M353.9 400.0L654.5 695.1M257.2 555.2L927.2 412.7M395.7 391.1L696.4 686.2M276.0 573.7L946.0 431.2M437.6 382.2L738.2 677.3M313.6 610.5L983.6 468.0M521.4 364.4L822.0 659.5M332.4 629.0L1002.4 486.5M563.2 355.5L863.9 650.6M351.2 647.4L1021.2 504.9M605.1 346.6L905.7 641.7M370.0 665.9L1040.0 523.4M647.0 337.7L947.6 632.7M388.8 684.3L1058.8 541.8M688.9 328.8L989.5 623.8M407.5 702.7L1077.5 560.2M730.7 319.9L1031.4 614.9M426.3 721.2L1096.3 578.7M772.6 311.0L1073.2 606.0M445.1 739.6L1115.1 597.1M814.5 302.1L1115.1 597.1" stroke="#8ea6c4" stroke-width="0.9" fill="none" opacity=".76"/><path d="M294.8 592.1L964.8 449.6" stroke="#2fa63a" stroke-width="1" fill="none"/><path d="M479.5 373.3L780.1 668.4" stroke="#b03c58" stroke-width="1" fill="none"/><path d="M414 160.6L1253 208.8" stroke="#ff0000" stroke-width="3" shape-rendering="crispEdges" fill="none"/><circle cx="629.5" cy="521.5" r="10" fill="none" stroke="#fff" stroke-width="1.300"/><circle cx="629.5" cy="521.5" r="10" fill="none" stroke="#f00" stroke-width="1.300" stroke-dasharray="3.927 3.927"/><path d="M609.5 521.5H624.5M634.5 521.5H649.5M629.5 501.5V516.5M629.5 526.5V541.5" stroke="#000" stroke-width="1"/><path d="M24.80000000000001 1015.5L34.80000000000001 1025.2" stroke="#e01818" stroke-width="2"/><path d="M24.80000000000001 1015.5L47.30000000000001 1010.8" stroke="#12d012" stroke-width="2"/><path d="M24.80000000000001 1015.5V994.2" stroke="#1414e0" stroke-width="2"/></svg>
<span class="t " style="left:196px;top:1040px;color:#1818e0;letter-spacing:0;">z</span>
<span class="t " style="left:218px;top:1056px;color:#14cc14;letter-spacing:0;">y</span>
<span class="t " style="left:205px;top:1071px;color:#e02020;letter-spacing:0;">x</span>
<span class="t " style="left:237.5px;top:1079.5px;color:#eee;letter-spacing:0;">(1)</span>
<span class="t " style="left:187px;top:68px;color:#e4e4e4;letter-spacing:-0.577px;">User Ortho</span>
<span class="t " style="left:177px;top:88px;color:#e4e4e4;letter-spacing:-0.649px;">Important hotkeys</span>
<span class="t" style="left:177px;top:112px;color:#e4e4e4;letter-spacing:-0.587px;">Select with - LEFT Mouse Button</span>
<span class="t" style="left:177px;top:124px;color:#e4e4e4;letter-spacing:-0.664px;">Add to / subtract from selection - Shift SELECTMOUSE</span>
<span class="t" style="left:177px;top:136px;color:#e4e4e4;letter-spacing:-0.651px;">Selection methods Circle, Border and Lasso select can be negated by holding Shift key</span>
<span class="t" style="left:177px;top:148px;color:#e4e4e4;letter-spacing:-0.624px;">Move view - RIGHTMOUSE&nbsp; |&nbsp; Shift TRACKPADPAN</span>
<span class="t" style="left:177px;top:160px;color:#e4e4e4;letter-spacing:-0.605px;">Rotate view - MIDDLEMOUSE&nbsp; |&nbsp; TRACKPADPAN&nbsp; |&nbsp; MOUSEROTATE</span>
<span class="t" style="left:177px;top:172px;color:#e4e4e4;letter-spacing:-0.539px;">Zoom view - Ctrl MIDDLEMOUSE&nbsp; |&nbsp; TRACKPADZOOM&nbsp; |&nbsp; Ctrl TRACKPADPAN&nbsp; |&nbsp; NUMPAD_PLUS&nbsp; |&nbsp; NUMPAD_MINUS&nbsp; |&nbsp; Ctrl EQUAL&nbsp; |&nbsp; Ctrl MINUS&nbsp; |&nbsp; WHEELINMOUSE&nbsp; |&nbsp; WHEELOUTMOUSE</span>
<span class="t" style="left:177px;top:184px;color:#e4e4e4;letter-spacing:-0.566px;">Reset 3D view - NUMPAD_ASTERIX</span>
<span class="t" style="left:177px;top:196px;color:#e4e4e4;letter-spacing:-0.591px;">Set 3D Cursor - Alt ACTIONMOUSE</span>
<span class="t" style="left:177px;top:208px;color:#e4e4e4;letter-spacing:-0.791px;">Search Menu - SPACE</span>
<div style="left:177px;top:227px;width:19px;height:1px;background:#c4c6c8;"></div>
<span class="t" style="left:177px;top:232px;color:#e4e4e4;letter-spacing:-0.563px;">Switch to / from Camera view - NUMPAD_PERIOD</span>
<span class="t" style="left:177px;top:244px;color:#e4e4e4;letter-spacing:-0.662px;">Render image - F12</span>
<span class="t" style="left:177px;top:256px;color:#e4e4e4;letter-spacing:-0.606px;">Show/Hide Renderview - F11</span>
<div class="pbg" style="left:1428px;top:57px;width:180px;height:1042px;"></div>
<div style="left:1428px;top:57px;width:1px;height:1042px;background:#8693a3;"></div>
<div style="left:1428px;top:57px;width:1px;height:191px;background:#6d7a90;"></div>
<div style="left:8px;top:57px;width:1600px;height:1px;background:rgba(255,255,255,.09);"></div>
<div class="pbd" style="left:1429px;top:248px;width:179px;height:61px;"></div>
<div class="ph" style="left:1429px;top:57px;width:179px;height:191px;"></div>
<svg style="left:1596px;top:57px;" width="12" height="12" viewBox="0 0 12 12"><path d="M0 0L12 12" stroke="#1c2430" stroke-width="1.3"/><path d="M-1.4 0L12 13.4" stroke="#8f9db3" stroke-width="0.9"/><path d="M4 0L12 8" stroke="#1c2430" stroke-width="1.3"/><path d="M2.6 0L12 9.4" stroke="#8f9db3" stroke-width="0.9"/><path d="M8 0L12 4" stroke="#1c2430" stroke-width="1.3"/><path d="M6.6 0L12 5.4" stroke="#8f9db3" stroke-width="0.9"/></svg>
<svg style="left:1440px;top:64.5px;" width="9" height="9" viewBox="0 0 9 9"><path d="M0.3 0.5L8.3 4.5L0.3 8.5Z" fill="#6fcbe3"/></svg>
<div style="left:1453px;top:62px;width:14px;height:14px;background:linear-gradient(#6d95d6,#4f78bc);border:1px solid #1c2a44;border-radius:3.500px;"></div><svg style="left:1453px;top:60px;" width="16" height="16" viewBox="0 0 16 16"><path d="M3.500 8L6.500 11.500L13 2.500" fill="none" stroke="#f4f4f4" stroke-width="2.200" stroke-linecap="round" stroke-linejoin="round"/></svg>
<span class="t c" style="left:1473px;top:62px;">Grease Pencil</span>
<svg style="left:1587px;top:68px;shape-rendering:crispEdges;" width="12" height="6" viewBox="0 0 12 6"><rect x="0" y="0" width="1" height="1" fill="#bcc6d8"/><rect x="0" y="1" width="1" height="1" fill="#10182a"/><rect x="3" y="0" width="1" height="1" fill="#bcc6d8"/><rect x="3" y="1" width="1" height="1" fill="#10182a"/><rect x="6" y="0" width="1" height="1" fill="#bcc6d8"/><rect x="6" y="1" width="1" height="1" fill="#10182a"/><rect x="9" y="0" width="1" height="1" fill="#bcc6d8"/><rect x="9" y="1" width="1" height="1" fill="#10182a"/><rect x="0" y="3" width="1" height="1" fill="#bcc6d8"/><rect x="0" y="4" width="1" height="1" fill="#10182a"/><rect x="3" y="3" width="1" height="1" fill="#bcc6d8"/><rect x="3" y="4" width="1" height="1" fill="#10182a"/><rect x="6" y="3" width="1" height="1" fill="#bcc6d8"/><rect x="6" y="4" width="1" height="1" fill="#10182a"/><rect x="9" y="3" width="1" height="1" fill="#bcc6d8"/><rect x="9" y="4" width="1" height="1" fill="#10182a"/></svg>
<svg style="left:1440px;top:88.5px;" width="9" height="9" viewBox="0 0 9 9"><path d="M0.3 0.5L8.3 4.5L0.3 8.5Z" fill="#6fcbe3"/></svg>
<span class="t c" style="left:1453px;top:86px;">View</span>
<svg style="left:1587px;top:92px;shape-rendering:crispEdges;" width="12" height="6" viewBox="0 0 12 6"><rect x="0" y="0" width="1" height="1" fill="#bcc6d8"/><rect x="0" y="1" width="1" height="1" fill="#10182a"/><rect x="3" y="0" width="1" height="1" fill="#bcc6d8"/><rect x="3" y="1" width="1" height="1" fill="#10182a"/><rect x="6" y="0" width="1" height="1" fill="#bcc6d8"/><rect x="6" y="1" width="1" height="1" fill="#10182a"/><rect x="9" y="0" width="1" height="1" fill="#bcc6d8"/><rect x="9" y="1" width="1" height="1" fill="#10182a"/><rect x="0" y="3" width="1" height="1" fill="#bcc6d8"/><rect x="0" y="4" width="1" height="1" fill="#10182a"/><rect x="3" y="3" width="1" height="1" fill="#bcc6d8"/><rect x="3" y="4" width="1" height="1" fill="#10182a"/><rect x="6" y="3" width="1" height="1" fill="#bcc6d8"/><rect x="6" y="4" width="1" height="1" fill="#10182a"/><rect x="9" y="3" width="1" height="1" fill="#bcc6d8"/><rect x="9" y="4" width="1" height="1" fill="#10182a"/></svg>
<svg style="left:1440px;top:112.5px;" width="9" height="9" viewBox="0 0 9 9"><path d="M0.3 0.5L8.3 4.5L0.3 8.5Z" fill="#6fcbe3"/></svg>
<span class="t c" style="left:1453px;top:110px;">3D Cursor</span>
<svg style="left:1587px;top:116px;shape-rendering:crispEdges;" width="12" height="6" viewBox="0 0 12 6"><rect x="0" y="0" width="1" height="1" fill="#bcc6d8"/><rect x="0" y="1" width="1" height="1" fill="#10182a"/><rect x="3" y="0" width="1" height="1" fill="#bcc6d8"/><rect x="3" y="1" width="1" height="1" fill="#10182a"/><rect x="6" y="0" width="1" height="1" fill="#bcc6d8"/><rect x="6" y="1" width="1" height="1" fill="#10182a"/><rect x="9" y="0" width="1" height="1" fill="#bcc6d8"/><rect x="9" y="1" width="1" height="1" fill="#10182a"/><rect x="0" y="3" width="1" height="1" fill="#bcc6d8"/><rect x="0" y="4" width="1" height="1" fill="#10182a"/><rect x="3" y="3" width="1" height="1" fill="#bcc6d8"/><rect x="3" y="4" width="1" height="1" fill="#10182a"/><rect x="6" y="3" width="1" height="1" fill="#bcc6d8"/><rect x="6" y="4" width="1" height="1" fill="#10182a"/><rect x="9" y="3" width="1" height="1" fill="#bcc6d8"/><rect x="9" y="4" width="1" height="1" fill="#10182a"/></svg>
<svg style="left:1440px;top:136.5px;" width="9" height="9" viewBox="0 0 9 9"><path d="M0.3 0.5L8.3 4.5L0.3 8.5Z" fill="#6fcbe3"/></svg>
<span class="t c" style="left:1453px;top:134px;">Display</span>
<svg style="left:1587px;top:140px;shape-rendering:crispEdges;" width="12" height="6" viewBox="0 0 12 6"><rect x="0" y="0" width="1" height="1" fill="#bcc6d8"/><rect x="0" y="1" width="1" height="1" fill="#10182a"/><rect x="3" y="0" width="1" height="1" fill="#bcc6d8"/><rect x="3" y="1" width="1" height="1" fill="#10182a"/><rect x="6" y="0" width="1" height="1" fill="#bcc6d8"/><rect x="6" y="1" width="1" height="1" fill="#10182a"/><rect x="9" y="0" width="1" height="1" fill="#bcc6d8"/><rect x="9" y="1" width="1" height="1" fill="#10182a"/><rect x="0" y="3" width="1" height="1" fill="#bcc6d8"/><rect x="0" y="4" width="1" height="1" fill="#10182a"/><rect x="3" y="3" width="1" height="1" fill="#bcc6d8"/><rect x="3" y="4" width="1" height="1" fill="#10182a"/><rect x="6" y="3" width="1" height="1" fill="#bcc6d8"/><rect x="6" y="4" width="1" height="1" fill="#10182a"/><rect x="9" y="3" width="1" height="1" fill="#bcc6d8"/><rect x="9" y="4" width="1" height="1" fill="#10182a"/></svg>
<svg style="left:1440px;top:160.5px;" width="9" height="9" viewBox="0 0 9 9"><path d="M0.3 0.5L8.3 4.5L0.3 8.5Z" fill="#6fcbe3"/></svg>
<span class="t c" style="left:1453px;top:158px;">Shading</span>
<svg style="left:1587px;top:164px;shape-rendering:crispEdges;" width="12" height="6" viewBox="0 0 12 6"><rect x="0" y="0" width="1" height="1" fill="#bcc6d8"/><rect x="0" y="1" width="1" height="1" fill="#10182a"/><rect x="3" y="0" width="1" height="1" fill="#bcc6d8"/><rect x="3" y="1" width="1" height="1" fill="#10182a"/><rect x="6" y="0" width="1" height="1" fill="#bcc6d8"/><rect x="6" y="1" width="1" height="1" fill="#10182a"/><rect x="9" y="0" width="1" height="1" fill="#bcc6d8"/><rect x="9" y="1" width="1" height="1" fill="#10182a"/><rect x="0" y="3" width="1" height="1" fill="#bcc6d8"/><rect x="0" y="4" width="1" height="1" fill="#10182a"/><rect x="3" y="3" width="1" height="1" fill="#bcc6d8"/><rect x="3" y="4" width="1" height="1" fill="#10182a"/><rect x="6" y="3" width="1" height="1" fill="#bcc6d8"/><rect x="6" y="4" width="1" height="1" fill="#10182a"/><rect x="9" y="3" width="1" height="1" fill="#bcc6d8"/><rect x="9" y="4" width="1" height="1" fill="#10182a"/></svg>
<svg style="left:1440px;top:184.5px;" width="9" height="9" viewBox="0 0 9 9"><path d="M0.3 0.5L8.3 4.5L0.3 8.5Z" fill="#6fcbe3"/></svg>
<div style="left:1453px;top:182px;width:14px;height:14px;background:linear-gradient(#3b506f,#2b3d5a);border:1px solid #1a2434;border-radius:3.500px;"></div>
<span class="t c" style="left:1473px;top:182px;">Motion Tracking</span>
<svg style="left:1587px;top:188px;shape-rendering:crispEdges;" width="12" height="6" viewBox="0 0 12 6"><rect x="0" y="0" width="1" height="1" fill="#bcc6d8"/><rect x="0" y="1" width="1" height="1" fill="#10182a"/><rect x="3" y="0" width="1" height="1" fill="#bcc6d8"/><rect x="3" y="1" width="1" height="1" fill="#10182a"/><rect x="6" y="0" width="1" height="1" fill="#bcc6d8"/><rect x="6" y="1" width="1" height="1" fill="#10182a"/><rect x="9" y="0" width="1" height="1" fill="#bcc6d8"/><rect x="9" y="1" width="1" height="1" fill="#10182a"/><rect x="0" y="3" width="1" height="1" fill="#bcc6d8"/><rect x="0" y="4" width="1" height="1" fill="#10182a"/><rect x="3" y="3" width="1" height="1" fill="#bcc6d8"/><rect x="3" y="4" width="1" height="1" fill="#10182a"/><rect x="6" y="3" width="1" height="1" fill="#bcc6d8"/><rect x="6" y="4" width="1" height="1" fill="#10182a"/><rect x="9" y="3" width="1" height="1" fill="#bcc6d8"/><rect x="9" y="4" width="1" height="1" fill="#10182a"/></svg>
<svg style="left:1440px;top:208.5px;" width="9" height="9" viewBox="0 0 9 9"><path d="M0.3 0.5L8.3 4.5L0.3 8.5Z" fill="#6fcbe3"/></svg>
<div style="left:1453px;top:206px;width:14px;height:14px;background:linear-gradient(#3b506f,#2b3d5a);border:1px solid #1a2434;border-radius:3.500px;"></div>
<span class="t c" style="left:1473px;top:206px;">Background Images</span>
<svg style="left:1587px;top:212px;shape-rendering:crispEdges;" width="12" height="6" viewBox="0 0 12 6"><rect x="0" y="0" width="1" height="1" fill="#bcc6d8"/><rect x="0" y="1" width="1" height="1" fill="#10182a"/><rect x="3" y="0" width="1" height="1" fill="#bcc6d8"/><rect x="3" y="1" width="1" height="1" fill="#10182a"/><rect x="6" y="0" width="1" height="1" fill="#bcc6d8"/><rect x="6" y="1" width="1" height="1" fill="#10182a"/><rect x="9" y="0" width="1" height="1" fill="#bcc6d8"/><rect x="9" y="1" width="1" height="1" fill="#10182a"/><rect x="0" y="3" width="1" height="1" fill="#bcc6d8"/><rect x="0" y="4" width="1" height="1" fill="#10182a"/><rect x="3" y="3" width="1" height="1" fill="#bcc6d8"/><rect x="3" y="4" width="1" height="1" fill="#10182a"/><rect x="6" y="3" width="1" height="1" fill="#bcc6d8"/><rect x="6" y="4" width="1" height="1" fill="#10182a"/><rect x="9" y="3" width="1" height="1" fill="#bcc6d8"/><rect x="9" y="4" width="1" height="1" fill="#10182a"/></svg>
<svg style="left:1440px;top:233px;" width="10" height="9" viewBox="0 0 10 9"><path d="M0.5 0.5L9.5 0.5L5 8.5Z" fill="#6fcbe3"/></svg>
<span class="t c" style="left:1453px;top:230px;">Important Hotkeys</span>
<svg style="left:1587px;top:236px;shape-rendering:crispEdges;" width="12" height="6" viewBox="0 0 12 6"><rect x="0" y="0" width="1" height="1" fill="#bcc6d8"/><rect x="0" y="1" width="1" height="1" fill="#10182a"/><rect x="3" y="0" width="1" height="1" fill="#bcc6d8"/><rect x="3" y="1" width="1" height="1" fill="#10182a"/><rect x="6" y="0" width="1" height="1" fill="#bcc6d8"/><rect x="6" y="1" width="1" height="1" fill="#10182a"/><rect x="9" y="0" width="1" height="1" fill="#bcc6d8"/><rect x="9" y="1" width="1" height="1" fill="#10182a"/><rect x="0" y="3" width="1" height="1" fill="#bcc6d8"/><rect x="0" y="4" width="1" height="1" fill="#10182a"/><rect x="3" y="3" width="1" height="1" fill="#bcc6d8"/><rect x="3" y="4" width="1" height="1" fill="#10182a"/><rect x="6" y="3" width="1" height="1" fill="#bcc6d8"/><rect x="6" y="4" width="1" height="1" fill="#10182a"/><rect x="9" y="3" width="1" height="1" fill="#bcc6d8"/><rect x="9" y="4" width="1" height="1" fill="#10182a"/></svg>
<div class="btn" style="left:1436px;top:257px;width:164px;height:20px;border-radius:5px;"></div>
<span class="t k" style="left:1417.5px;width:200px;text-align:center;top:261.5px;">Hide text</span>
<div style="left:1436px;top:283px;width:31px;height:19px;background:#fff;border:1px solid #4a5565;border-radius:4px;"></div>
<div class="num" style="left:1475px;top:283px;width:125px;height:19px;border-radius:10px;"></div>
<svg style="left:1481px;top:289px;" width="4" height="7" viewBox="0 0 4 7"><path d="M4 0V7L0 3.500Z" fill="#7796e2"/></svg>
<svg style="left:1590px;top:289px;" width="4" height="7" viewBox="0 0 4 7"><path d="M0 0V7L4 3.500Z" fill="#7796e2"/></svg>
<span class="t k" style="left:1491px;top:287px;">Fontsize:</span>
<span class="t k" style="left:1383.5px;width:200px;text-align:right;top:287px;letter-spacing:0;">11</span>
<div style="left:1601px;top:248px;width:7px;height:851px;background:rgba(255,255,255,.04);"></div>
<div class="hdr2" style="left:8px;top:1099px;width:1600px;height:26px;"></div>
<svg style="left:8px;top:1113px;" width="12" height="12" viewBox="0 0 12 12"><path d="M0 0L12 12" stroke="#aab6c4" stroke-width="1.3"/><path d="M0 1.4L10.6 12" stroke="#2a3440" stroke-width="0.9"/><path d="M0 4L8 12" stroke="#aab6c4" stroke-width="1.3"/><path d="M0 5.4L6.6 12" stroke="#2a3440" stroke-width="0.9"/><path d="M0 8L4 12" stroke="#aab6c4" stroke-width="1.3"/><path d="M0 9.4L2.5999999999999996 12" stroke="#2a3440" stroke-width="0.9"/></svg>
<span class="t w" style="left:24px;top:1107px;">View</span>
<span class="t w" style="left:69px;top:1107px;">Select</span>
<span class="t w" style="left:120px;top:1107px;">Add</span>
<span class="t w" style="left:159px;top:1107px;">Object</span>
<div class="dd" style="left:205px;top:1102px;width:113px;height:20px;border-radius:5px;"></div>
<svg style="left:211px;top:1105px" width="13" height="13" viewBox="0 0 16 16"><path d="M8 1L14.500 4.200V11.600L8 15L1.500 11.600V4.200Z" fill="#fbd9a8" stroke="#7a400a" stroke-linejoin="round" stroke-width=".9"/><path d="M8 7.600L14.500 4.200V11.600L8 15Z" fill="#d9781a"/><path d="M8 7.600L1.500 4.200V11.600L8 15Z" fill="#f2a040"/></svg>
<span class="t w" style="left:229px;top:1107px;">Object Mode</span>
<svg style="left:308px;top:1105px;" width="7" height="14" viewBox="0 0 7 14"><path d="M3.5 1L6.5 6L0.5 6Z M3.5 13L6.5 8L0.5 8Z" fill="#9aa7bb"/></svg>
<div class="dd" style="left:323px;top:1102px;width:35px;height:20px;border-radius:5px;"></div>
<svg style="left:327px;top:1104px" width="16" height="16" viewBox="0 0 16 16"><circle cx="8" cy="8" r="6.500" fill="url(#gs)" stroke="#222" stroke-width=".8"/><circle cx="8" cy="8" r="6" fill="#fff" opacity=".55"/></svg>
<svg style="left:348px;top:1105px;" width="7" height="14" viewBox="0 0 7 14"><path d="M3.5 1L6.5 6L0.5 6Z M3.5 13L6.5 8L0.5 8Z" fill="#9aa7bb"/></svg>
<div class="dd" style="left:363px;top:1102px;width:36px;height:20px;border-radius:5px 0 0 5px;"></div>
<svg style="left:366px;top:1104px" width="16" height="16" viewBox="0 0 16 16"><circle cx="5.500" cy="5" r="4" fill="url(#gs)" stroke="#222" stroke-width=".8"/><circle cx="11" cy="11" r="4" fill="url(#gs)" stroke="#222" stroke-width=".8"/><rect x="6.500" y="6.500" width="3.500" height="3.500" fill="#fff" stroke="#1a50e0" stroke-width="1.200"/></svg>
<svg style="left:388px;top:1105px;" width="7" height="14" viewBox="0 0 7 14"><path d="M3.5 1L6.5 6L0.5 6Z M3.5 13L6.5 8L0.5 8Z" fill="#9aa7bb"/></svg>
<div class="btn" style="left:398px;top:1102px;width:20px;height:20px;border-radius:0 5px 5px 0;"></div>
<svg style="left:400px;top:1104px" width="16" height="16" viewBox="0 0 16 16"><circle cx="3" cy="3" r="1.700" fill="#fff" stroke="#2a55c8"/><circle cx="8" cy="3" r="1.700" fill="#fff" stroke="#2a55c8"/><circle cx="13" cy="3" r="1.700" fill="#fff" stroke="#2a55c8"/><path d="M1 10.500L4.500 7.500V9.500H11.500V7.500L15 10.500L11.500 13.500V11.500H4.500V13.500Z" fill="#fff" stroke="#222" stroke-width=".9" stroke-linejoin="round"/></svg>
<div class="blu" style="left:424px;top:1102px;width:20px;height:20px;border-radius:5px 0 0 5px;"></div>
<svg style="left:426px;top:1104px" width="16" height="16" viewBox="0 0 16 16"><path d="M8 9.500V1.500" stroke="#fff" stroke-width="3"/><path d="M8 9.500V1.500" stroke="#3a6ee0" stroke-width="1.600"/><path d="M8 9.500L1.500 14" stroke="#400" stroke-width="3.200" stroke-linecap="round"/><path d="M8 9.500L1.500 14" stroke="#e83a2a" stroke-width="2" stroke-linecap="round"/><path d="M8 9.500L14.500 14" stroke="#040" stroke-width="3.200" stroke-linecap="round"/><path d="M8 9.500L14.500 14" stroke="#5ad02a" stroke-width="2" stroke-linecap="round"/></svg>
<div class="blu" style="left:443px;top:1102px;width:20px;height:20px;"></div>
<svg style="left:445px;top:1104px" width="16" height="16" viewBox="0 0 16 16"><path d="M2 14L10.500 5.500M7 2.500L14 2L13.500 9Z" fill="#8db8f0" stroke="#1d3a78" stroke-width="1" stroke-linejoin="round"/><path d="M2 14L10 6" stroke="#1d3a78" stroke-width="3.400" stroke-linecap="round"/><path d="M2 14L10 6" stroke="#8db8f0" stroke-width="1.800" stroke-linecap="round"/></svg>
<div class="drk" style="left:462px;top:1102px;width:21px;height:20px;"></div>
<svg style="left:464px;top:1104px" width="16" height="16" viewBox="0 0 16 16"><path d="M2.500 14Q3 4 13.500 3" fill="none" stroke="#5b88c8" stroke-width="2.200" stroke-linecap="round"/></svg>
<div class="drk" style="left:482px;top:1102px;width:21px;height:20px;"></div>
<svg style="left:484px;top:1104px" width="16" height="16" viewBox="0 0 16 16"><path d="M2 14L10 6" stroke="#5b88c8" stroke-width="2" stroke-linecap="round"/><rect x="8.500" y="2" width="5.500" height="5.500" fill="#5b88c8"/></svg>
<div class="dd" style="left:502px;top:1102px;width:73px;height:20px;border-radius:0 5px 5px 0;"></div>
<span class="t w" style="left:510px;top:1107px;">Global</span>
<svg style="left:565px;top:1105px;" width="7" height="14" viewBox="0 0 7 14"><path d="M3.5 1L6.5 6L0.5 6Z M3.5 13L6.5 8L0.5 8Z" fill="#9aa7bb"/></svg>
<div class="blu" style="left:581px;top:1102px;width:19px;height:20px;border-radius:5px;"></div>
<svg style="left:582px;top:1104px" width="16" height="16" viewBox="0 0 16 16"><rect x="1.500" y="2.500" width="10" height="10" fill="#8aa0c0" stroke="#eaeaea" stroke-width="1.300"/><rect x="3" y="10" width="4" height="1" fill="#eee"/><path d="M11 6.500Q14.500 6.500 14.500 9Q14.500 10.800 12.700 10.800Q14.500 11 14.500 13Q14.500 15 12 15Q9.500 15 9.500 13Q9.500 11 11.300 10.800Q9.500 10.600 9.500 9Q9.500 6.500 11 6.500Z" fill="none" stroke="#111" stroke-width="2.400"/><path d="M11 6.500Q14.500 6.500 14.500 9Q14.500 10.800 12.700 10.800Q14.500 11 14.500 13Q14.500 15 12 15Q9.500 15 9.500 13Q9.500 11 11.300 10.800Q9.500 10.600 9.500 9Q9.500 6.500 11 6.500Z" fill="none" stroke="#f0f0f0" stroke-width="1"/></svg>
<div class="btn" style="left:605px;top:1102px;width:20px;height:20px;border-radius:5px 0 0 5px;"></div>
<svg style="left:607px;top:1104px" width="16" height="16" viewBox="0 0 16 16"><g transform="rotate(45 8 8)"><path d="M4.800 14.500V6.500A3.200 3.200 0 0 1 11.200 6.500V14.500" fill="none" stroke="#5a5f5c" stroke-width="3.600"/><path d="M4.800 14.500V6.500A3.200 3.200 0 0 1 11.200 6.500V14.500" fill="none" stroke="#bcc4be" stroke-width="2"/></g></svg>
<div class="dd" style="left:624px;top:1102px;width:36px;height:20px;"></div>
<svg style="left:627px;top:1104px" width="16" height="16" viewBox="0 0 16 16"><path d="M1.500 5V11M4.500 6V10M11.500 6V10M14.500 5V11M1.500 8H4.500M11.500 8H14.500" stroke="#e8e8e8" stroke-width="1.100"/><rect x="7" y="3" width="2" height="10" fill="#fff"/><rect x="6.300" y="3" width="3.400" height="10" fill="#7ab0ff" opacity=".5"/></svg>
<svg style="left:649px;top:1105px;" width="7" height="14" viewBox="0 0 7 14"><path d="M3.5 1L6.5 6L0.5 6Z M3.5 13L6.5 8L0.5 8Z" fill="#9aa7bb"/></svg>
<div class="btn" style="left:659px;top:1102px;width:21px;height:20px;border-radius:0 5px 5px 0;"></div>
<svg style="left:661px;top:1104px" width="16" height="16" viewBox="0 0 16 16"><path d="M6.500 3V15M11.500 3V15M2 7.500H15M2 12.500H15" stroke="#222" stroke-width="1.300"/><circle cx="5" cy="4.500" r="3.600" fill="#fff" stroke="#2a55c8" stroke-width="1.200"/><circle cx="5" cy="4.500" r="1.500" fill="#3a6ee0"/></svg>
<div class="btn" style="left:685px;top:1102px;width:20px;height:20px;border-radius:5px 0 0 5px;"></div>
<svg style="left:687px;top:1104px" width="16" height="16" viewBox="0 0 16 16"><path d="M1 5H4L5 3.500H9L10 5H15V15H1Z" fill="#ececec" stroke="#111" stroke-width="1"/><rect x="1.500" y="7" width="13" height="6" fill="#3a3a3a"/><circle cx="8.500" cy="10" r="3.300" fill="#222" stroke="#ddd" stroke-width=".9"/><circle cx="8.500" cy="10" r="1.600" fill="#b0303a"/><path d="M12.500 0L13.500 2.500L16 3.500L13.500 4.500L12.500 7L11.500 4.500L9 3.500L11.500 2.500Z" fill="#f8e860" stroke="#a08a10" stroke-width=".5"/></svg>
<div class="btn" style="left:704px;top:1102px;width:20px;height:20px;border-radius:0 5px 5px 0;"></div>
<svg style="left:706px;top:1104px" width="16" height="16" viewBox="0 0 16 16"><rect x="2.500" y="7" width="12" height="8" fill="#eee" stroke="#111" stroke-width="1"/><path d="M4 9.500H13M4 12H13" stroke="#555" stroke-width="1"/><path d="M1.500 4L13.500 1L14.200 4L2.300 7Z" fill="#222" stroke="#111" stroke-width=".8"/><path d="M4 3.500L5.500 6M7.500 2.700L9 5.200M11 1.800L12.500 4.300" stroke="#eee" stroke-width="1.300"/></svg>
<div class="hdr" style="left:8px;top:1126px;width:1600px;height:26px;"></div>
<svg style="left:8px;top:1140px;" width="12" height="12" viewBox="0 0 12 12"><path d="M0 0L12 12" stroke="#aab6c4" stroke-width="1.3"/><path d="M0 1.4L10.6 12" stroke="#2a3440" stroke-width="0.9"/><path d="M0 4L8 12" stroke="#aab6c4" stroke-width="1.3"/><path d="M0 5.4L6.6 12" stroke="#2a3440" stroke-width="0.9"/><path d="M0 8L4 12" stroke="#aab6c4" stroke-width="1.3"/><path d="M0 9.4L2.5999999999999996 12" stroke="#2a3440" stroke-width="0.9"/></svg>
<svg style="left:1596px;top:1126px;" width="12" height="12" viewBox="0 0 12 12"><path d="M0 0L12 12" stroke="#1c2430" stroke-width="1.3"/><path d="M-1.4 0L12 13.4" stroke="#8f9db3" stroke-width="0.9"/><path d="M4 0L12 8" stroke="#1c2430" stroke-width="1.3"/><path d="M2.6 0L12 9.4" stroke="#8f9db3" stroke-width="0.9"/><path d="M8 0L12 4" stroke="#1c2430" stroke-width="1.3"/><path d="M6.6 0L12 5.4" stroke="#8f9db3" stroke-width="0.9"/></svg>
<span class="t w" style="left:24px;top:1134px;">View</span>
<span class="t w" style="left:69px;top:1134px;">Marker</span>
<span class="t w" style="left:124px;top:1134px;">Frame</span>
<span class="t w" style="left:176px;top:1134px;">Playback</span>
<div class="btn" style="left:235px;top:1130px;width:20px;height:19px;border-radius:5px 0 0 5px;"></div>
<svg style="left:237px;top:1131.5px" width="16" height="16" viewBox="0 0 16 16"><circle cx="8" cy="8" r="6.800" fill="#f4f4f4" stroke="#222" stroke-width="1"/><path d="M8 8V1.200A6.800 6.800 0 0 1 14.800 8Z" fill="#f59a1a"/><path d="M8 8L5 4.500" stroke="#222" stroke-width="1.200"/><path d="M8 8L9.500 12" stroke="#d02020" stroke-width="1.200"/></svg>
<div class="btn" style="left:254px;top:1130px;width:20px;height:19px;border-radius:0 5px 5px 0;"></div>
<svg style="left:256px;top:1131.5px" width="16" height="16" viewBox="0 0 16 16"><path d="M4.500 8V5Q4.500 1.800 8 1.800Q11.500 1.800 11.500 5V8" fill="none" stroke="#222" stroke-width="3"/><path d="M4.500 8V5Q4.500 1.800 8 1.800Q11.500 1.800 11.500 5V8" fill="none" stroke="#e8e8e8" stroke-width="1.300"/><rect x="2.500" y="7.500" width="11" height="7.500" fill="#eaeaea" stroke="#222" stroke-width="1"/><rect x="6.500" y="10" width="3" height="2" fill="#666"/></svg>
<div class="num" style="left:280px;top:1130px;width:116px;height:19px;border-radius:10px 0 0 10px;"></div>
<svg style="left:286px;top:1136.0px;" width="4" height="7" viewBox="0 0 4 7"><path d="M4 0V7L0 3.500Z" fill="#7796e2"/></svg><svg style="left:386px;top:1136.0px;" width="4" height="7" viewBox="0 0 4 7"><path d="M0 0V7L4 3.500Z" fill="#7796e2"/></svg>
<span class="t k" style="left:295px;top:1134px;">Start:</span>
<span class="t k" style="left:180.5px;width:200px;text-align:right;top:1134px;letter-spacing:0;">1</span>
<div class="num" style="left:395px;top:1130px;width:112px;height:19px;border-radius:0 10px 10px 0;"></div>
<svg style="left:401px;top:1136.0px;" width="4" height="7" viewBox="0 0 4 7"><path d="M4 0V7L0 3.500Z" fill="#7796e2"/></svg><svg style="left:497px;top:1136.0px;" width="4" height="7" viewBox="0 0 4 7"><path d="M0 0V7L4 3.500Z" fill="#7796e2"/></svg>
<span class="t k" style="left:411px;top:1134px;">End:</span>
<span class="t k" style="left:291px;width:200px;text-align:right;top:1134px;letter-spacing:0;">250</span>
<div class="num" style="left:512px;top:1130px;width:90px;height:19px;border-radius:10px;"></div>
<svg style="left:518px;top:1136.0px;" width="4" height="7" viewBox="0 0 4 7"><path d="M4 0V7L0 3.500Z" fill="#7796e2"/></svg><svg style="left:592px;top:1136.0px;" width="4" height="7" viewBox="0 0 4 7"><path d="M0 0V7L4 3.500Z" fill="#7796e2"/></svg>
<span class="t k" style="left:386.5px;width:200px;text-align:right;top:1134px;letter-spacing:0;">1</span>
<div class="btn" style="left:618px;top:1130px;width:21px;height:19px;border-radius:5px 0 0 5px;"></div>
<svg style="left:620px;top:1131.5px;" width="16" height="16" viewBox="0 0 16 16"><g fill="#f6f6f6" stroke="#1a1a1a" stroke-width="1.100" stroke-linejoin="round"><path d="M2 3V13M3 8L8.500 3V13ZM8.500 8L14 3V13Z"/></g></svg>
<div class="btn" style="left:638px;top:1130px;width:21px;height:19px;border-radius:0;"></div>
<svg style="left:640px;top:1131.5px;" width="16" height="16" viewBox="0 0 16 16"><g fill="#f6f6f6" stroke="#1a1a1a" stroke-width="1.100" stroke-linejoin="round"><path d="M1.500 8L7.500 3V13ZM7.500 8L13.500 3V13Z"/></g></svg>
<div class="btn" style="left:658px;top:1130px;width:21px;height:19px;border-radius:0;"></div>
<svg style="left:660px;top:1131.5px;" width="16" height="16" viewBox="0 0 16 16"><g fill="#f6f6f6" stroke="#1a1a1a" stroke-width="1.100" stroke-linejoin="round"><path d="M2.500 8L13 2V14Z"/></g></svg>
<div class="btn" style="left:678px;top:1130px;width:21px;height:19px;border-radius:0;"></div>
<svg style="left:680px;top:1131.5px;" width="16" height="16" viewBox="0 0 16 16"><g fill="#f6f6f6" stroke="#1a1a1a" stroke-width="1.100" stroke-linejoin="round"><path d="M13.500 8L3 2V14Z"/></g></svg>
<div class="btn" style="left:698px;top:1130px;width:21px;height:19px;border-radius:0;"></div>
<svg style="left:700px;top:1131.5px;" width="16" height="16" viewBox="0 0 16 16"><g fill="#f6f6f6" stroke="#1a1a1a" stroke-width="1.100" stroke-linejoin="round"><path d="M14.500 8L8.500 3V13ZM8.500 8L2.500 3V13Z"/></g></svg>
<div class="btn" style="left:718px;top:1130px;width:20px;height:19px;border-radius:0 5px 5px 0;"></div>
<svg style="left:720px;top:1131.5px;" width="16" height="16" viewBox="0 0 16 16"><g fill="#f6f6f6" stroke="#1a1a1a" stroke-width="1.100" stroke-linejoin="round"><path d="M14 3V13M13 8L7.500 3V13ZM7.500 8L2 3V13Z"/></g></svg>
<div class="dd" style="left:743px;top:1130px;width:115px;height:19px;border-radius:5px;"></div>
<span class="t w" style="left:751px;top:1134px;">No Sync</span>
<svg style="left:848px;top:1132.5px;" width="7" height="14" viewBox="0 0 7 14"><path d="M3.5 1L6.5 6L0.5 6Z M3.5 13L6.5 8L0.5 8Z" fill="#9aa7bb"/></svg>
<div class="btn" style="left:874px;top:1130px;width:20px;height:19px;border-radius:5px;"></div>
<svg style="left:876px;top:1131.5px" width="16" height="16" viewBox="0 0 16 16"><circle cx="8" cy="8" r="5.500" fill="#e03a1a" stroke="#7a1a08" stroke-width="1"/><circle cx="6.800" cy="6.500" r="2" fill="#ff8a60" opacity=".7"/></svg>
<div class="txf" style="left:899px;top:1130px;width:131px;height:19px;border-radius:5px 0 0 5px;"></div>
<svg style="left:902px;top:1131.5px" width="16" height="16" viewBox="0 0 16 16"><circle cx="5" cy="11" r="3" fill="none" stroke="#222" stroke-width="3"/><circle cx="5" cy="11" r="3" fill="none" stroke="#f0e6a0" stroke-width="1.400"/><path d="M5 8V1.500H8M5 4.500H7.500M8 11H14.500" fill="none" stroke="#222" stroke-width="3" stroke-linecap="round"/><path d="M5 8V1.500H8M5 4.500H7.500M8 11H14.500" fill="none" stroke="#f0e6a0" stroke-width="1.300" stroke-linecap="round"/></svg>
<div class="btn" style="left:1029px;top:1130px;width:21px;height:19px;"></div>
<svg style="left:1031px;top:1131.5px" width="16" height="16" viewBox="0 0 16 16"><circle cx="4.500" cy="11.500" r="2.800" fill="none" stroke="#222" stroke-width="3"/><path d="M6.500 9.500L14 2M11.500 4.500L13.500 6.500" fill="none" stroke="#222" stroke-width="3" stroke-linecap="round"/><circle cx="4.500" cy="11.500" r="2.800" fill="none" stroke="#eee" stroke-width="1.300"/><path d="M6.500 9.500L14 2M11.500 4.500L13.500 6.500" fill="none" stroke="#eee" stroke-width="1.300" stroke-linecap="round"/></svg>
<div class="btn" style="left:1049px;top:1130px;width:20px;height:19px;border-radius:0 5px 5px 0;"></div>
<svg style="left:1051px;top:1131.5px" width="16" height="16" viewBox="0 0 16 16"><circle cx="4.500" cy="11.500" r="2.800" fill="none" stroke="#222" stroke-width="3"/><path d="M6.500 9.500L14 2M11.500 4.500L13.500 6.500" fill="none" stroke="#222" stroke-width="3" stroke-linecap="round"/><circle cx="4.500" cy="11.500" r="2.800" fill="none" stroke="#eee" stroke-width="1.300"/><path d="M6.500 9.500L14 2M11.500 4.500L13.500 6.500" fill="none" stroke="#eee" stroke-width="1.300" stroke-linecap="round"/><path d="M2 2L14 14M14 2L2 14" stroke="#e02020" stroke-width="1.800" stroke-linecap="round"/></svg>
<div class="hdr2" style="left:1609px;top:57px;width:303px;height:26px;"></div>
<svg style="left:1900px;top:57px;" width="12" height="12" viewBox="0 0 12 12"><path d="M0 0L12 12" stroke="#1c2430" stroke-width="1.3"/><path d="M-1.4 0L12 13.4" stroke="#8f9db3" stroke-width="0.9"/><path d="M4 0L12 8" stroke="#1c2430" stroke-width="1.3"/><path d="M2.6 0L12 9.4" stroke="#8f9db3" stroke-width="0.9"/><path d="M8 0L12 4" stroke="#1c2430" stroke-width="1.3"/><path d="M6.6 0L12 5.4" stroke="#8f9db3" stroke-width="0.9"/></svg>
<span class="t w" style="left:1625px;top:65px;">View</span>
<div class="dd" style="left:1663px;top:60px;width:119px;height:20px;border-radius:5px;"></div>
<span class="t w" style="left:1671px;top:65px;">All Scenes</span>
<svg style="left:1772px;top:63px;" width="7" height="14" viewBox="0 0 7 14"><path d="M3.5 1L6.5 6L0.5 6Z M3.5 13L6.5 8L0.5 8Z" fill="#9aa7bb"/></svg>
<div class="txf" style="left:1788px;top:60px;width:110px;height:20px;border-radius:5px;background:linear-gradient(#bcbcbc,#a6a6a6);"></div>
<svg style="left:1791px;top:62px" width="16" height="16" viewBox="0 0 16 16"><path d="M2 14.500L7 9" stroke="#5a2a08" stroke-width="3" stroke-linecap="round"/><path d="M2 14.500L7 9" stroke="#e89050" stroke-width="1.500" stroke-linecap="round"/><circle cx="10" cy="6" r="4.500" fill="#e8d8dc" stroke="#222" stroke-width="1.300" fill-opacity=".8"/><circle cx="9" cy="5" r="1.500" fill="#fff"/></svg>
<div style="left:1609px;top:83px;width:303px;height:20px;background:#758293;"></div>
<div style="left:1609px;top:103px;width:303px;height:20px;background:#7a8796;"></div>
<div style="left:1609px;top:123px;width:303px;height:20px;background:#758293;"></div>
<div style="left:1609px;top:143px;width:303px;height:20px;background:#7a8796;"></div>
<div style="left:1609px;top:163px;width:303px;height:20px;background:#758293;"></div>
<div style="left:1609px;top:183px;width:303px;height:20px;background:#7a8796;"></div>
<div style="left:1609px;top:203px;width:303px;height:20px;background:#758293;"></div>
<div style="left:1609px;top:223px;width:303px;height:20px;background:#7a8796;"></div>
<div style="left:1609px;top:243px;width:303px;height:6px;background:#758293;"></div>
<div style="left:1609px;top:83px;width:243px;height:20px;background:#8a8d90;"></div>
<div style="left:1852px;top:83px;width:1px;height:166px;background:#66727f;"></div>
<div style="left:1872px;top:83px;width:1px;height:166px;background:#66727f;"></div>
<div style="left:1892px;top:83px;width:1px;height:166px;background:#66727f;"></div>
<svg style="left:1609px;top:237px;" width="12" height="12" viewBox="0 0 12 12"><path d="M0 0L12 12" stroke="#aab6c4" stroke-width="1.3"/><path d="M0 1.4L10.6 12" stroke="#2a3440" stroke-width="0.9"/><path d="M0 4L8 12" stroke="#aab6c4" stroke-width="1.3"/><path d="M0 5.4L6.6 12" stroke="#2a3440" stroke-width="0.9"/><path d="M0 8L4 12" stroke="#aab6c4" stroke-width="1.3"/><path d="M0 9.4L2.5999999999999996 12" stroke="#2a3440" stroke-width="0.9"/></svg>
<svg style="left:1610px;top:83px;" width="120" height="165" viewBox="0 0 120 165"><path d="M12.500 11.500H22M26.500 21V92M26.500 71.500H42M26.500 91.500H44" stroke="#2a2a2a" stroke-width="1" fill="none" opacity=".75"/></svg>
<svg style="left:1612.5px;top:89.0px;" width="11" height="11" viewBox="0 0 11 11"><circle cx="5.500" cy="5.500" r="4.200" fill="#f2f2f2" stroke="#1a1a1a" stroke-width="1.100"/><path d="M3 5.500H8" stroke="#000" stroke-width="1.100"/></svg>
<svg style="left:1628px;top:84px;" width="22" height="22" viewBox="0 0 22 22"><circle cx="11" cy="11" r="10" fill="#c9ced4" opacity=".55"/></svg>
<svg style="left:1631px;top:86px" width="16" height="16" viewBox="0 0 16 16"><circle cx="3" cy="3" r="2.200" fill="#f3ee7a" stroke="#9a962c" stroke-width=".7"/><circle cx="3" cy="3" r=".9" fill="#fff"/><path d="M8.500 2.500V10.500A2.800 1.200 0 0 0 14 10.500V2.500Z" fill="url(#gb)" stroke="#1a2a55" stroke-width=".8"/><ellipse cx="11.250" cy="2.500" rx="2.750" ry="1.200" fill="#cfe2fa" stroke="#1a2a55" stroke-width=".7"/><circle cx="6" cy="11.500" r="3.600" fill="url(#gs)" stroke="#222" stroke-width=".8"/></svg>
<span class="t k" style="left:1650.5px;top:88.5px;">Scene</span>
<svg style="left:1637.5px;top:109.0px;" width="11" height="11" viewBox="0 0 11 11"><circle cx="5.500" cy="5.500" r="4.200" fill="#f2f2f2" stroke="#1a1a1a" stroke-width="1.100"/><path d="M3 5.500H8" stroke="#000" stroke-width="1.100"/><path d="M5.500 3V8" stroke="#000" stroke-width="1.100"/></svg>
<svg style="left:1651px;top:106px" width="16" height="16" viewBox="0 0 16 16"><path d="M5 5L15 6.500L13.500 15.500L3.500 14Z" fill="#e9e2b8" stroke="#333" stroke-width=".8"/><path d="M3.500 3.500L14 4.500L13 14.500L2.500 13.500Z" fill="#efe9c8" stroke="#333" stroke-width=".8"/><rect x="1" y="1" width="11" height="11" fill="#f4f4f4" stroke="#222" stroke-width=".9"/><rect x="6.500" y="2.500" width="3" height="5.500" fill="url(#gb)" stroke="#1a2a55" stroke-width=".6"/><circle cx="5" cy="8.500" r="1.900" fill="url(#gs)" stroke="#333" stroke-width=".6"/><circle cx="3.300" cy="3.300" r="1.100" fill="#f0ea60"/></svg>
<span class="t k" style="left:1670.5px;top:108.5px;letter-spacing:-0.68px;">RenderLayers</span>
<div style="left:1748px;top:108px;width:2px;height:12px;background:#5a6573;"></div>
<svg style="left:1756px;top:103px;" width="22" height="22" viewBox="0 0 22 22"><circle cx="11" cy="11" r="10" fill="#c9ced4" opacity=".45"/></svg>
<svg style="left:1759px;top:106px" width="16" height="16" viewBox="0 0 16 16"><path d="M5 5L15 6.500L13.500 15.500L3.500 14Z" fill="#e9e2b8" stroke="#333" stroke-width=".8"/><path d="M3.500 3.500L14 4.500L13 14.500L2.500 13.500Z" fill="#efe9c8" stroke="#333" stroke-width=".8"/><rect x="1" y="1" width="11" height="11" fill="#f4f4f4" stroke="#222" stroke-width=".9"/><rect x="6.500" y="2.500" width="3" height="5.500" fill="url(#gb)" stroke="#1a2a55" stroke-width=".6"/><circle cx="5" cy="8.500" r="1.900" fill="url(#gs)" stroke="#333" stroke-width=".6"/><circle cx="3.300" cy="3.300" r="1.100" fill="#f0ea60"/></svg>
<svg style="left:1651px;top:126px" width="16" height="16" viewBox="0 0 16 16"><circle cx="8" cy="8" r="7.800" fill="#c2c9d2" opacity=".75"/><circle cx="8" cy="8" r="6.300" fill="url(#gb)" stroke="#1c2c48" stroke-width=".9"/><path d="M4 5Q6 2.500 9 3.500Q8 6 6.500 6.500Q6 9 4 8.500Q3 7 4 5ZM9.500 8Q12 7 13 9Q12.500 12 10.500 12.500Q9 10.500 9.500 8Z" fill="#4c9a3a"/></svg>
<span class="t k" style="left:1670.5px;top:128.5px;">World</span>
<svg style="left:1631.5px;top:149.0px;" width="11" height="11" viewBox="0 0 11 11"><circle cx="5.500" cy="5.500" r="4.200" fill="#f2f2f2" stroke="#1a1a1a" stroke-width="1.100"/><path d="M3 5.500H8" stroke="#000" stroke-width="1.100"/><path d="M5.500 3V8" stroke="#000" stroke-width="1.100"/></svg>
<svg style="left:1651px;top:146px" width="16" height="16" viewBox="0 0 16 16"><circle cx="4.500" cy="4.300" r="3.300" fill="url(#go)" stroke="#7a400a" stroke-width=".9"/><circle cx="11" cy="4.300" r="3.300" fill="url(#go)" stroke="#7a400a" stroke-width=".9"/><circle cx="4.500" cy="4.300" r="1.200" fill="#7a400a"/><circle cx="11" cy="4.300" r="1.200" fill="#7a400a"/><path d="M3.500 8H11.500V14H3.500Z" fill="url(#go)" stroke="#7a400a" stroke-width=".9"/><path d="M11.500 10L15.500 9V14L11.500 13Z" fill="#ffb763" stroke="#7a400a" stroke-width=".9"/><path d="M0.800 10.500H3.500V12H0.800Z" fill="#ffb763" stroke="#7a400a" stroke-width=".7"/></svg>
<span class="t k" style="left:1670.5px;top:148.5px;">Camera</span>
<div style="left:1720px;top:148px;width:2px;height:12px;background:#5a6573;"></div>
<svg style="left:1730px;top:146px" width="16" height="16" viewBox="0 0 16 16"><circle cx="8" cy="8" r="9" fill="#a4adb8" opacity=".7"/><circle cx="4.500" cy="4.300" r="3.300" fill="#c9ced4" stroke="#7f8894" stroke-width=".9"/><circle cx="11" cy="4.300" r="3.300" fill="#c9ced4" stroke="#7f8894" stroke-width=".9"/><circle cx="4.500" cy="4.300" r="1.200" fill="#7f8894"/><circle cx="11" cy="4.300" r="1.200" fill="#7f8894"/><path d="M3.500 8H11.500V14H3.500Z" fill="#c9ced4" stroke="#7f8894" stroke-width=".9"/><path d="M11.500 10L15.500 9V14L11.500 13Z" fill="#d8dce0" stroke="#7f8894" stroke-width=".9"/><path d="M0.800 10.500H3.500V12H0.800Z" fill="#d8dce0" stroke="#7f8894" stroke-width=".7"/></svg>
<svg style="left:1631.5px;top:169.0px;" width="11" height="11" viewBox="0 0 11 11"><circle cx="5.500" cy="5.500" r="4.200" fill="#f2f2f2" stroke="#1a1a1a" stroke-width="1.100"/><path d="M3 5.500H8" stroke="#000" stroke-width="1.100"/><path d="M5.500 3V8" stroke="#000" stroke-width="1.100"/></svg>
<svg style="left:1651px;top:166px" width="16" height="16" viewBox="0 0 16 16"><path d="M8 0.800Q12.500 1 12.500 5.500Q12.500 7.500 10.500 9.500V11.500H5.500V9.500Q3.500 7.500 3.500 5.500Q3.500 1 8 0.800Z" fill="#ffc98a" stroke="#8a4a0c" stroke-width=".9"/><path d="M6.500 5L8 7.500L9.500 5" fill="none" stroke="#a55a10" stroke-width=".8"/><path d="M5.500 11.500H10.500V14H9.500L8 15.500L6.500 14H5.500Z" fill="#e8891e" stroke="#8a4a0c" stroke-width=".8"/><path d="M5.500 12.700H10.500" stroke="#8a4a0c" stroke-width=".6"/></svg>
<span class="t k" style="left:1670.5px;top:168.5px;">Lamp</span>
<div style="left:1709px;top:168px;width:2px;height:12px;background:#5a6573;"></div>
<svg style="left:1719px;top:166px;opacity:.55;" width="16" height="16" viewBox="0 0 16 16"><path d="M5 5L1.5 1.5M4.4 2.1L1.5 1.5L2.1 4.4" fill="none" stroke="#6e6b28" stroke-width="2.2" stroke-linecap="round"/><path d="M5 5L1.5 1.5M4.4 2.1L1.5 1.5L2.1 4.4" fill="none" stroke="#eeeaa8" stroke-width="1" stroke-linecap="round"/><path d="M11 5L14.5 1.5M13.9 4.4L14.5 1.5L11.6 2.1" fill="none" stroke="#6e6b28" stroke-width="2.2" stroke-linecap="round"/><path d="M11 5L14.5 1.5M13.9 4.4L14.5 1.5L11.6 2.1" fill="none" stroke="#eeeaa8" stroke-width="1" stroke-linecap="round"/><path d="M5 11L1.5 14.5M2.1 11.6L1.5 14.5L4.4 13.9" fill="none" stroke="#6e6b28" stroke-width="2.2" stroke-linecap="round"/><path d="M5 11L1.5 14.5M2.1 11.6L1.5 14.5L4.4 13.9" fill="none" stroke="#eeeaa8" stroke-width="1" stroke-linecap="round"/><path d="M11 11L14.5 14.5M11.6 13.9L14.5 14.5L13.9 11.6" fill="none" stroke="#6e6b28" stroke-width="2.2" stroke-linecap="round"/><path d="M11 11L14.5 14.5M11.6 13.9L14.5 14.5L13.9 11.6" fill="none" stroke="#eeeaa8" stroke-width="1" stroke-linecap="round"/><circle cx="8" cy="8" r="3.600" fill="#d6d27a" stroke="#77742a" stroke-width="0.8"/><circle cx="8" cy="8" r="1.900" fill="#fff"/></svg>
<svg style="left:1856px;top:146.5px" width="16" height="16" viewBox="0 0 16 16"><ellipse cx="8" cy="8.500" rx="7" ry="3.300" fill="#9aa3ad" opacity=".8"/><path d="M1 8Q8 3.500 15 8" fill="none" stroke="#b9c0c8" stroke-width="1.200" opacity=".8"/></svg>
<svg style="left:1877px;top:146.5px" width="16" height="16" viewBox="0 0 16 16"><path d="M3 1V13L6 10.200L8.200 15L10.200 14L8 9.500H12Z" fill="#fff" stroke="#111" stroke-width="1" stroke-linejoin="round"/></svg>
<svg style="left:1895px;top:146.5px" width="15" height="15" viewBox="0 0 16 16"><path d="M1 4.500H3.500L4.500 3H8.500L9.500 4.500H15V14H1Z" fill="#f2f2f2" stroke="#0c0c0c" stroke-width="1"/><rect x="1.800" y="6.500" width="12.400" height="6" fill="#1a1a1a"/><circle cx="9.800" cy="9.500" r="3.300" fill="#3c1616" stroke="#ececec" stroke-width="1"/><circle cx="9.200" cy="8.900" r="1.300" fill="#a05050"/><circle cx="3.600" cy="5.500" r=".8" fill="#ff2020"/></svg>
<svg style="left:1856px;top:166.5px" width="16" height="16" viewBox="0 0 16 16"><ellipse cx="8" cy="8.500" rx="7" ry="3.300" fill="#9aa3ad" opacity=".8"/><path d="M1 8Q8 3.500 15 8" fill="none" stroke="#b9c0c8" stroke-width="1.200" opacity=".8"/></svg>
<svg style="left:1877px;top:166.5px" width="16" height="16" viewBox="0 0 16 16"><path d="M3 1V13L6 10.200L8.200 15L10.200 14L8 9.500H12Z" fill="#fff" stroke="#111" stroke-width="1" stroke-linejoin="round"/></svg>
<svg style="left:1895px;top:166.5px" width="15" height="15" viewBox="0 0 16 16"><path d="M1 4.500H3.500L4.500 3H8.500L9.500 4.500H15V14H1Z" fill="#f2f2f2" stroke="#0c0c0c" stroke-width="1"/><rect x="1.800" y="6.500" width="12.400" height="6" fill="#1a1a1a"/><circle cx="9.800" cy="9.500" r="3.300" fill="#3c1616" stroke="#ececec" stroke-width="1"/><circle cx="9.200" cy="8.900" r="1.300" fill="#a05050"/><circle cx="3.600" cy="5.500" r=".8" fill="#ff2020"/></svg>
<div class="hdr" style="left:1609px;top:250px;width:303px;height:26px;"></div>
<svg style="left:1900px;top:250px;" width="12" height="12" viewBox="0 0 12 12"><path d="M0 0L12 12" stroke="#1c2430" stroke-width="1.3"/><path d="M-1.4 0L12 13.4" stroke="#8f9db3" stroke-width="0.9"/><path d="M4 0L12 8" stroke="#1c2430" stroke-width="1.3"/><path d="M2.6 0L12 9.4" stroke="#8f9db3" stroke-width="0.9"/><path d="M8 0L12 4" stroke="#1c2430" stroke-width="1.3"/><path d="M6.6 0L12 5.4" stroke="#8f9db3" stroke-width="0.9"/></svg>
<div class="blu" style="left:1618px;top:253px;width:20px;height:20px;border-radius:5px 0 0 5px;"></div>
<svg style="left:1620px;top:255px;" width="16" height="16" viewBox="0 0 16 16"><path d="M1 4.500H3.500L4.500 3H8.500L9.500 4.500H15V14H1Z" fill="#f2f2f2" stroke="#0c0c0c" stroke-width="1"/><rect x="1.800" y="6.500" width="12.400" height="6" fill="#1a1a1a"/><circle cx="9.800" cy="9.500" r="3.300" fill="#3c1616" stroke="#ececec" stroke-width="1"/><circle cx="9.200" cy="8.900" r="1.300" fill="#a05050"/><circle cx="3.600" cy="5.500" r=".8" fill="#ff2020"/></svg>
<div class="drk" style="left:1637px;top:253px;width:21px;height:20px;border-radius:0;"></div>
<svg style="left:1639px;top:255px;opacity:.55;" width="16" height="16" viewBox="0 0 16 16"><path d="M5 5L15 6.500L13.500 15.500L3.500 14Z" fill="#e9e2b8" stroke="#333" stroke-width=".8"/><path d="M3.500 3.500L14 4.500L13 14.500L2.500 13.500Z" fill="#efe9c8" stroke="#333" stroke-width=".8"/><rect x="1" y="1" width="11" height="11" fill="#f4f4f4" stroke="#222" stroke-width=".9"/><rect x="6.500" y="2.500" width="3" height="5.500" fill="url(#gb)" stroke="#1a2a55" stroke-width=".6"/><circle cx="5" cy="8.500" r="1.900" fill="url(#gs)" stroke="#333" stroke-width=".6"/><circle cx="3.300" cy="3.300" r="1.100" fill="#f0ea60"/></svg>
<div class="drk" style="left:1657px;top:253px;width:21px;height:20px;border-radius:0;"></div>
<svg style="left:1659px;top:255px;opacity:.55;" width="16" height="16" viewBox="0 0 16 16"><circle cx="3" cy="3" r="2.200" fill="#f3ee7a" stroke="#9a962c" stroke-width=".7"/><circle cx="3" cy="3" r=".9" fill="#fff"/><path d="M8.500 2.500V10.500A2.800 1.200 0 0 0 14 10.500V2.500Z" fill="url(#gb)" stroke="#1a2a55" stroke-width=".8"/><ellipse cx="11.250" cy="2.500" rx="2.750" ry="1.200" fill="#cfe2fa" stroke="#1a2a55" stroke-width=".7"/><circle cx="6" cy="11.500" r="3.600" fill="url(#gs)" stroke="#222" stroke-width=".8"/></svg>
<div class="drk" style="left:1677px;top:253px;width:21px;height:20px;border-radius:0;"></div>
<svg style="left:1679px;top:255px;opacity:.55;" width="16" height="16" viewBox="0 0 16 16"><circle cx="8" cy="8" r="6.300" fill="url(#gb)" stroke="#1c2c48" stroke-width=".9"/><path d="M4 5Q6 2.500 9 3.500Q8 6 6.500 6.500Q6 9 4 8.500Q3 7 4 5ZM9.500 8Q12 7 13 9Q12.500 12 10.500 12.500Q9 10.500 9.500 8Z" fill="#4c9a3a"/></svg>
<div class="drk" style="left:1697px;top:253px;width:21px;height:20px;border-radius:0 5px 5px 0;"></div>
<svg style="left:1699px;top:255px;opacity:.55;" width="16" height="16" viewBox="0 0 16 16"><rect x="1.500" y="1.500" width="13" height="13" fill="#e8e2d8" stroke="#555" stroke-width=".8"/><rect x="1.5" y="1.5" width="3.250" height="3.250" fill="#a83232"/><rect x="8.0" y="1.5" width="3.250" height="3.250" fill="#a83232"/><rect x="4.75" y="4.75" width="3.250" height="3.250" fill="#a83232"/><rect x="11.25" y="4.75" width="3.250" height="3.250" fill="#a83232"/><rect x="1.5" y="8.0" width="3.250" height="3.250" fill="#a83232"/><rect x="8.0" y="8.0" width="3.250" height="3.250" fill="#a83232"/><rect x="4.75" y="11.25" width="3.250" height="3.250" fill="#a83232"/><rect x="11.25" y="11.25" width="3.250" height="3.250" fill="#a83232"/></svg>
<div class="pbg" style="left:1609px;top:276px;width:303px;height:876px;"></div>
<svg style="left:1619px;top:286px" width="16" height="16" viewBox="0 0 16 16"><path d="M1.500 14.500L7 9" stroke="#222" stroke-width="2.600" stroke-linecap="round"/><path d="M1.500 14.500L7 9" stroke="#ddd" stroke-width="1.100" stroke-linecap="round"/><path d="M4.500 6.500L9.500 11.500L11 10L10.500 8.500L14.500 4.500L11.500 1.500L7.500 5.500L6 5Z" fill="#e6e6e6" stroke="#222" stroke-width=".9" stroke-linejoin="round"/></svg>
<svg style="left:1642px;top:286px" width="14" height="14" viewBox="0 0 16 16"><circle cx="3" cy="3" r="2.200" fill="#f3ee7a" stroke="#9a962c" stroke-width=".7"/><circle cx="3" cy="3" r=".9" fill="#fff"/><path d="M8.500 2.500V10.500A2.800 1.200 0 0 0 14 10.500V2.500Z" fill="url(#gb)" stroke="#1a2a55" stroke-width=".8"/><ellipse cx="11.250" cy="2.500" rx="2.750" ry="1.200" fill="#cfe2fa" stroke="#1a2a55" stroke-width=".7"/><circle cx="6" cy="11.500" r="3.600" fill="url(#gs)" stroke="#222" stroke-width=".8"/></svg>
<span class="t k" style="left:1661px;top:289px;">Scene</span>
<div class="ph" style="left:1609px;top:311px;width:303px;height:312px;"></div>
<svg style="left:1622px;top:319.5px;" width="9" height="9" viewBox="0 0 9 9"><path d="M0.3 0.5L8.3 4.5L0.3 8.5Z" fill="#6fcbe3"/></svg>
<span class="t c" style="left:1634px;top:317px;">Render</span>
<svg style="left:1891px;top:323px;shape-rendering:crispEdges;" width="12" height="6" viewBox="0 0 12 6"><rect x="0" y="0" width="1" height="1" fill="#bcc6d8"/><rect x="0" y="1" width="1" height="1" fill="#10182a"/><rect x="3" y="0" width="1" height="1" fill="#bcc6d8"/><rect x="3" y="1" width="1" height="1" fill="#10182a"/><rect x="6" y="0" width="1" height="1" fill="#bcc6d8"/><rect x="6" y="1" width="1" height="1" fill="#10182a"/><rect x="9" y="0" width="1" height="1" fill="#bcc6d8"/><rect x="9" y="1" width="1" height="1" fill="#10182a"/><rect x="0" y="3" width="1" height="1" fill="#bcc6d8"/><rect x="0" y="4" width="1" height="1" fill="#10182a"/><rect x="3" y="3" width="1" height="1" fill="#bcc6d8"/><rect x="3" y="4" width="1" height="1" fill="#10182a"/><rect x="6" y="3" width="1" height="1" fill="#bcc6d8"/><rect x="6" y="4" width="1" height="1" fill="#10182a"/><rect x="9" y="3" width="1" height="1" fill="#bcc6d8"/><rect x="9" y="4" width="1" height="1" fill="#10182a"/></svg>
<svg style="left:1622px;top:343.5px;" width="9" height="9" viewBox="0 0 9 9"><path d="M0.3 0.5L8.3 4.5L0.3 8.5Z" fill="#6fcbe3"/></svg>
<span class="t c" style="left:1634px;top:341px;">Dimensions</span>
<svg style="left:1891px;top:347px;shape-rendering:crispEdges;" width="12" height="6" viewBox="0 0 12 6"><rect x="0" y="0" width="1" height="1" fill="#bcc6d8"/><rect x="0" y="1" width="1" height="1" fill="#10182a"/><rect x="3" y="0" width="1" height="1" fill="#bcc6d8"/><rect x="3" y="1" width="1" height="1" fill="#10182a"/><rect x="6" y="0" width="1" height="1" fill="#bcc6d8"/><rect x="6" y="1" width="1" height="1" fill="#10182a"/><rect x="9" y="0" width="1" height="1" fill="#bcc6d8"/><rect x="9" y="1" width="1" height="1" fill="#10182a"/><rect x="0" y="3" width="1" height="1" fill="#bcc6d8"/><rect x="0" y="4" width="1" height="1" fill="#10182a"/><rect x="3" y="3" width="1" height="1" fill="#bcc6d8"/><rect x="3" y="4" width="1" height="1" fill="#10182a"/><rect x="6" y="3" width="1" height="1" fill="#bcc6d8"/><rect x="6" y="4" width="1" height="1" fill="#10182a"/><rect x="9" y="3" width="1" height="1" fill="#bcc6d8"/><rect x="9" y="4" width="1" height="1" fill="#10182a"/></svg>
<svg style="left:1622px;top:367.5px;" width="9" height="9" viewBox="0 0 9 9"><path d="M0.3 0.5L8.3 4.5L0.3 8.5Z" fill="#6fcbe3"/></svg>
<span class="t c" style="left:1634px;top:365px;">Metadata</span>
<svg style="left:1891px;top:371px;shape-rendering:crispEdges;" width="12" height="6" viewBox="0 0 12 6"><rect x="0" y="0" width="1" height="1" fill="#bcc6d8"/><rect x="0" y="1" width="1" height="1" fill="#10182a"/><rect x="3" y="0" width="1" height="1" fill="#bcc6d8"/><rect x="3" y="1" width="1" height="1" fill="#10182a"/><rect x="6" y="0" width="1" height="1" fill="#bcc6d8"/><rect x="6" y="1" width="1" height="1" fill="#10182a"/><rect x="9" y="0" width="1" height="1" fill="#bcc6d8"/><rect x="9" y="1" width="1" height="1" fill="#10182a"/><rect x="0" y="3" width="1" height="1" fill="#bcc6d8"/><rect x="0" y="4" width="1" height="1" fill="#10182a"/><rect x="3" y="3" width="1" height="1" fill="#bcc6d8"/><rect x="3" y="4" width="1" height="1" fill="#10182a"/><rect x="6" y="3" width="1" height="1" fill="#bcc6d8"/><rect x="6" y="4" width="1" height="1" fill="#10182a"/><rect x="9" y="3" width="1" height="1" fill="#bcc6d8"/><rect x="9" y="4" width="1" height="1" fill="#10182a"/></svg>
<svg style="left:1622px;top:391.5px;" width="9" height="9" viewBox="0 0 9 9"><path d="M0.3 0.5L8.3 4.5L0.3 8.5Z" fill="#6fcbe3"/></svg>
<span class="t c" style="left:1634px;top:389px;">Output</span>
<svg style="left:1891px;top:395px;shape-rendering:crispEdges;" width="12" height="6" viewBox="0 0 12 6"><rect x="0" y="0" width="1" height="1" fill="#bcc6d8"/><rect x="0" y="1" width="1" height="1" fill="#10182a"/><rect x="3" y="0" width="1" height="1" fill="#bcc6d8"/><rect x="3" y="1" width="1" height="1" fill="#10182a"/><rect x="6" y="0" width="1" height="1" fill="#bcc6d8"/><rect x="6" y="1" width="1" height="1" fill="#10182a"/><rect x="9" y="0" width="1" height="1" fill="#bcc6d8"/><rect x="9" y="1" width="1" height="1" fill="#10182a"/><rect x="0" y="3" width="1" height="1" fill="#bcc6d8"/><rect x="0" y="4" width="1" height="1" fill="#10182a"/><rect x="3" y="3" width="1" height="1" fill="#bcc6d8"/><rect x="3" y="4" width="1" height="1" fill="#10182a"/><rect x="6" y="3" width="1" height="1" fill="#bcc6d8"/><rect x="6" y="4" width="1" height="1" fill="#10182a"/><rect x="9" y="3" width="1" height="1" fill="#bcc6d8"/><rect x="9" y="4" width="1" height="1" fill="#10182a"/></svg>
<svg style="left:1622px;top:415.5px;" width="9" height="9" viewBox="0 0 9 9"><path d="M0.3 0.5L8.3 4.5L0.3 8.5Z" fill="#6fcbe3"/></svg>
<div style="left:1634px;top:413px;width:14px;height:14px;background:linear-gradient(#3b506f,#2b3d5a);border:1px solid #1a2434;border-radius:3.500px;"></div>
<span class="t c" style="left:1654px;top:413px;">Freestyle</span>
<svg style="left:1891px;top:419px;shape-rendering:crispEdges;" width="12" height="6" viewBox="0 0 12 6"><rect x="0" y="0" width="1" height="1" fill="#bcc6d8"/><rect x="0" y="1" width="1" height="1" fill="#10182a"/><rect x="3" y="0" width="1" height="1" fill="#bcc6d8"/><rect x="3" y="1" width="1" height="1" fill="#10182a"/><rect x="6" y="0" width="1" height="1" fill="#bcc6d8"/><rect x="6" y="1" width="1" height="1" fill="#10182a"/><rect x="9" y="0" width="1" height="1" fill="#bcc6d8"/><rect x="9" y="1" width="1" height="1" fill="#10182a"/><rect x="0" y="3" width="1" height="1" fill="#bcc6d8"/><rect x="0" y="4" width="1" height="1" fill="#10182a"/><rect x="3" y="3" width="1" height="1" fill="#bcc6d8"/><rect x="3" y="4" width="1" height="1" fill="#10182a"/><rect x="6" y="3" width="1" height="1" fill="#bcc6d8"/><rect x="6" y="4" width="1" height="1" fill="#10182a"/><rect x="9" y="3" width="1" height="1" fill="#bcc6d8"/><rect x="9" y="4" width="1" height="1" fill="#10182a"/></svg>
<svg style="left:1622px;top:439.5px;" width="9" height="9" viewBox="0 0 9 9"><path d="M0.3 0.5L8.3 4.5L0.3 8.5Z" fill="#6fcbe3"/></svg>
<span class="t c" style="left:1634px;top:437px;">Sampling</span>
<svg style="left:1891px;top:443px;shape-rendering:crispEdges;" width="12" height="6" viewBox="0 0 12 6"><rect x="0" y="0" width="1" height="1" fill="#bcc6d8"/><rect x="0" y="1" width="1" height="1" fill="#10182a"/><rect x="3" y="0" width="1" height="1" fill="#bcc6d8"/><rect x="3" y="1" width="1" height="1" fill="#10182a"/><rect x="6" y="0" width="1" height="1" fill="#bcc6d8"/><rect x="6" y="1" width="1" height="1" fill="#10182a"/><rect x="9" y="0" width="1" height="1" fill="#bcc6d8"/><rect x="9" y="1" width="1" height="1" fill="#10182a"/><rect x="0" y="3" width="1" height="1" fill="#bcc6d8"/><rect x="0" y="4" width="1" height="1" fill="#10182a"/><rect x="3" y="3" width="1" height="1" fill="#bcc6d8"/><rect x="3" y="4" width="1" height="1" fill="#10182a"/><rect x="6" y="3" width="1" height="1" fill="#bcc6d8"/><rect x="6" y="4" width="1" height="1" fill="#10182a"/><rect x="9" y="3" width="1" height="1" fill="#bcc6d8"/><rect x="9" y="4" width="1" height="1" fill="#10182a"/></svg>
<svg style="left:1622px;top:463.5px;" width="9" height="9" viewBox="0 0 9 9"><path d="M0.3 0.5L8.3 4.5L0.3 8.5Z" fill="#6fcbe3"/></svg>
<span class="t c" style="left:1634px;top:461px;">Volume Sampling</span>
<svg style="left:1891px;top:467px;shape-rendering:crispEdges;" width="12" height="6" viewBox="0 0 12 6"><rect x="0" y="0" width="1" height="1" fill="#bcc6d8"/><rect x="0" y="1" width="1" height="1" fill="#10182a"/><rect x="3" y="0" width="1" height="1" fill="#bcc6d8"/><rect x="3" y="1" width="1" height="1" fill="#10182a"/><rect x="6" y="0" width="1" height="1" fill="#bcc6d8"/><rect x="6" y="1" width="1" height="1" fill="#10182a"/><rect x="9" y="0" width="1" height="1" fill="#bcc6d8"/><rect x="9" y="1" width="1" height="1" fill="#10182a"/><rect x="0" y="3" width="1" height="1" fill="#bcc6d8"/><rect x="0" y="4" width="1" height="1" fill="#10182a"/><rect x="3" y="3" width="1" height="1" fill="#bcc6d8"/><rect x="3" y="4" width="1" height="1" fill="#10182a"/><rect x="6" y="3" width="1" height="1" fill="#bcc6d8"/><rect x="6" y="4" width="1" height="1" fill="#10182a"/><rect x="9" y="3" width="1" height="1" fill="#bcc6d8"/><rect x="9" y="4" width="1" height="1" fill="#10182a"/></svg>
<svg style="left:1622px;top:487.5px;" width="9" height="9" viewBox="0 0 9 9"><path d="M0.3 0.5L8.3 4.5L0.3 8.5Z" fill="#6fcbe3"/></svg>
<span class="t c" style="left:1634px;top:485px;">Light Paths</span>
<svg style="left:1891px;top:491px;shape-rendering:crispEdges;" width="12" height="6" viewBox="0 0 12 6"><rect x="0" y="0" width="1" height="1" fill="#bcc6d8"/><rect x="0" y="1" width="1" height="1" fill="#10182a"/><rect x="3" y="0" width="1" height="1" fill="#bcc6d8"/><rect x="3" y="1" width="1" height="1" fill="#10182a"/><rect x="6" y="0" width="1" height="1" fill="#bcc6d8"/><rect x="6" y="1" width="1" height="1" fill="#10182a"/><rect x="9" y="0" width="1" height="1" fill="#bcc6d8"/><rect x="9" y="1" width="1" height="1" fill="#10182a"/><rect x="0" y="3" width="1" height="1" fill="#bcc6d8"/><rect x="0" y="4" width="1" height="1" fill="#10182a"/><rect x="3" y="3" width="1" height="1" fill="#bcc6d8"/><rect x="3" y="4" width="1" height="1" fill="#10182a"/><rect x="6" y="3" width="1" height="1" fill="#bcc6d8"/><rect x="6" y="4" width="1" height="1" fill="#10182a"/><rect x="9" y="3" width="1" height="1" fill="#bcc6d8"/><rect x="9" y="4" width="1" height="1" fill="#10182a"/></svg>
<svg style="left:1622px;top:511.5px;" width="9" height="9" viewBox="0 0 9 9"><path d="M0.3 0.5L8.3 4.5L0.3 8.5Z" fill="#6fcbe3"/></svg>
<div style="left:1634px;top:509px;width:14px;height:14px;background:linear-gradient(#3b506f,#2b3d5a);border:1px solid #1a2434;border-radius:3.500px;"></div>
<span class="t c" style="left:1654px;top:509px;">Motion Blur</span>
<svg style="left:1891px;top:515px;shape-rendering:crispEdges;" width="12" height="6" viewBox="0 0 12 6"><rect x="0" y="0" width="1" height="1" fill="#bcc6d8"/><rect x="0" y="1" width="1" height="1" fill="#10182a"/><rect x="3" y="0" width="1" height="1" fill="#bcc6d8"/><rect x="3" y="1" width="1" height="1" fill="#10182a"/><rect x="6" y="0" width="1" height="1" fill="#bcc6d8"/><rect x="6" y="1" width="1" height="1" fill="#10182a"/><rect x="9" y="0" width="1" height="1" fill="#bcc6d8"/><rect x="9" y="1" width="1" height="1" fill="#10182a"/><rect x="0" y="3" width="1" height="1" fill="#bcc6d8"/><rect x="0" y="4" width="1" height="1" fill="#10182a"/><rect x="3" y="3" width="1" height="1" fill="#bcc6d8"/><rect x="3" y="4" width="1" height="1" fill="#10182a"/><rect x="6" y="3" width="1" height="1" fill="#bcc6d8"/><rect x="6" y="4" width="1" height="1" fill="#10182a"/><rect x="9" y="3" width="1" height="1" fill="#bcc6d8"/><rect x="9" y="4" width="1" height="1" fill="#10182a"/></svg>
<svg style="left:1622px;top:535.5px;" width="9" height="9" viewBox="0 0 9 9"><path d="M0.3 0.5L8.3 4.5L0.3 8.5Z" fill="#6fcbe3"/></svg>
<span class="t c" style="left:1634px;top:533px;">Film</span>
<svg style="left:1891px;top:539px;shape-rendering:crispEdges;" width="12" height="6" viewBox="0 0 12 6"><rect x="0" y="0" width="1" height="1" fill="#bcc6d8"/><rect x="0" y="1" width="1" height="1" fill="#10182a"/><rect x="3" y="0" width="1" height="1" fill="#bcc6d8"/><rect x="3" y="1" width="1" height="1" fill="#10182a"/><rect x="6" y="0" width="1" height="1" fill="#bcc6d8"/><rect x="6" y="1" width="1" height="1" fill="#10182a"/><rect x="9" y="0" width="1" height="1" fill="#bcc6d8"/><rect x="9" y="1" width="1" height="1" fill="#10182a"/><rect x="0" y="3" width="1" height="1" fill="#bcc6d8"/><rect x="0" y="4" width="1" height="1" fill="#10182a"/><rect x="3" y="3" width="1" height="1" fill="#bcc6d8"/><rect x="3" y="4" width="1" height="1" fill="#10182a"/><rect x="6" y="3" width="1" height="1" fill="#bcc6d8"/><rect x="6" y="4" width="1" height="1" fill="#10182a"/><rect x="9" y="3" width="1" height="1" fill="#bcc6d8"/><rect x="9" y="4" width="1" height="1" fill="#10182a"/></svg>
<svg style="left:1622px;top:559.5px;" width="9" height="9" viewBox="0 0 9 9"><path d="M0.3 0.5L8.3 4.5L0.3 8.5Z" fill="#6fcbe3"/></svg>
<span class="t c" style="left:1634px;top:557px;">Performance</span>
<svg style="left:1891px;top:563px;shape-rendering:crispEdges;" width="12" height="6" viewBox="0 0 12 6"><rect x="0" y="0" width="1" height="1" fill="#bcc6d8"/><rect x="0" y="1" width="1" height="1" fill="#10182a"/><rect x="3" y="0" width="1" height="1" fill="#bcc6d8"/><rect x="3" y="1" width="1" height="1" fill="#10182a"/><rect x="6" y="0" width="1" height="1" fill="#bcc6d8"/><rect x="6" y="1" width="1" height="1" fill="#10182a"/><rect x="9" y="0" width="1" height="1" fill="#bcc6d8"/><rect x="9" y="1" width="1" height="1" fill="#10182a"/><rect x="0" y="3" width="1" height="1" fill="#bcc6d8"/><rect x="0" y="4" width="1" height="1" fill="#10182a"/><rect x="3" y="3" width="1" height="1" fill="#bcc6d8"/><rect x="3" y="4" width="1" height="1" fill="#10182a"/><rect x="6" y="3" width="1" height="1" fill="#bcc6d8"/><rect x="6" y="4" width="1" height="1" fill="#10182a"/><rect x="9" y="3" width="1" height="1" fill="#bcc6d8"/><rect x="9" y="4" width="1" height="1" fill="#10182a"/></svg>
<svg style="left:1622px;top:583.5px;" width="9" height="9" viewBox="0 0 9 9"><path d="M0.3 0.5L8.3 4.5L0.3 8.5Z" fill="#6fcbe3"/></svg>
<span class="t c" style="left:1634px;top:581px;">Post Processing</span>
<svg style="left:1891px;top:587px;shape-rendering:crispEdges;" width="12" height="6" viewBox="0 0 12 6"><rect x="0" y="0" width="1" height="1" fill="#bcc6d8"/><rect x="0" y="1" width="1" height="1" fill="#10182a"/><rect x="3" y="0" width="1" height="1" fill="#bcc6d8"/><rect x="3" y="1" width="1" height="1" fill="#10182a"/><rect x="6" y="0" width="1" height="1" fill="#bcc6d8"/><rect x="6" y="1" width="1" height="1" fill="#10182a"/><rect x="9" y="0" width="1" height="1" fill="#bcc6d8"/><rect x="9" y="1" width="1" height="1" fill="#10182a"/><rect x="0" y="3" width="1" height="1" fill="#bcc6d8"/><rect x="0" y="4" width="1" height="1" fill="#10182a"/><rect x="3" y="3" width="1" height="1" fill="#bcc6d8"/><rect x="3" y="4" width="1" height="1" fill="#10182a"/><rect x="6" y="3" width="1" height="1" fill="#bcc6d8"/><rect x="6" y="4" width="1" height="1" fill="#10182a"/><rect x="9" y="3" width="1" height="1" fill="#bcc6d8"/><rect x="9" y="4" width="1" height="1" fill="#10182a"/></svg>
<svg style="left:1622px;top:607.5px;" width="9" height="9" viewBox="0 0 9 9"><path d="M0.3 0.5L8.3 4.5L0.3 8.5Z" fill="#6fcbe3"/></svg>
<span class="t c" style="left:1634px;top:605px;">Bake</span>
<svg style="left:1891px;top:611px;shape-rendering:crispEdges;" width="12" height="6" viewBox="0 0 12 6"><rect x="0" y="0" width="1" height="1" fill="#bcc6d8"/><rect x="0" y="1" width="1" height="1" fill="#10182a"/><rect x="3" y="0" width="1" height="1" fill="#bcc6d8"/><rect x="3" y="1" width="1" height="1" fill="#10182a"/><rect x="6" y="0" width="1" height="1" fill="#bcc6d8"/><rect x="6" y="1" width="1" height="1" fill="#10182a"/><rect x="9" y="0" width="1" height="1" fill="#bcc6d8"/><rect x="9" y="1" width="1" height="1" fill="#10182a"/><rect x="0" y="3" width="1" height="1" fill="#bcc6d8"/><rect x="0" y="4" width="1" height="1" fill="#10182a"/><rect x="3" y="3" width="1" height="1" fill="#bcc6d8"/><rect x="3" y="4" width="1" height="1" fill="#10182a"/><rect x="6" y="3" width="1" height="1" fill="#bcc6d8"/><rect x="6" y="4" width="1" height="1" fill="#10182a"/><rect x="9" y="3" width="1" height="1" fill="#bcc6d8"/><rect x="9" y="4" width="1" height="1" fill="#10182a"/></svg>
<svg style="left:1609px;top:1140px;" width="12" height="12" viewBox="0 0 12 12"><path d="M0 0L12 12" stroke="#aab6c4" stroke-width="1.3"/><path d="M0 1.4L10.6 12" stroke="#2a3440" stroke-width="0.9"/><path d="M0 4L8 12" stroke="#aab6c4" stroke-width="1.3"/><path d="M0 5.4L6.6 12" stroke="#2a3440" stroke-width="0.9"/><path d="M0 8L4 12" stroke="#aab6c4" stroke-width="1.3"/><path d="M0 9.4L2.5999999999999996 12" stroke="#2a3440" stroke-width="0.9"/></svg>
</div>
</body></html>
